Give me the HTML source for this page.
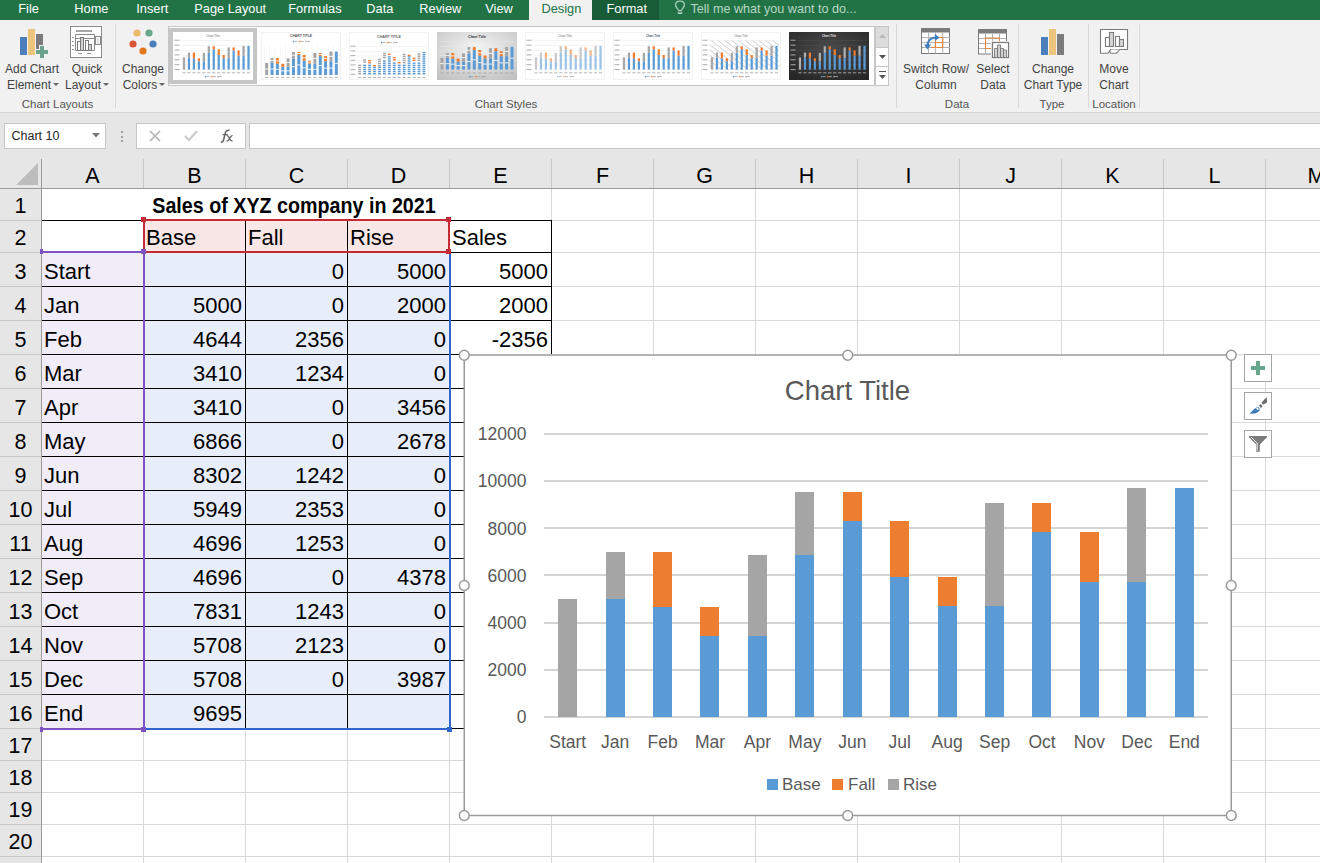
<!DOCTYPE html>
<html><head><meta charset="utf-8"><title>Excel</title><style>
*{margin:0;padding:0;box-sizing:border-box}
html,body{width:1320px;height:863px;overflow:hidden;background:#fff;font-family:"Liberation Sans", sans-serif}
.a{position:absolute}
.t{position:absolute;line-height:1;white-space:nowrap}
svg{position:absolute;overflow:visible}
</style></head><body>

<div class="a" style="left:0px;top:0px;width:1320px;height:20px;background:#217346"></div>
<div class="a" style="left:529px;top:0px;width:63px;height:20px;background:#f1f1f1"></div>
<div class="a" style="left:592px;top:0px;width:67px;height:20px;background:#185c37"></div>
<div class="t" style="left:18.30px;top:3.46px;font-size:12.8px;color:#fff;font-weight:normal;">File</div>
<div class="t" style="left:74.30px;top:3.46px;font-size:12.8px;color:#fff;font-weight:normal;">Home</div>
<div class="t" style="left:136.30px;top:3.46px;font-size:12.8px;color:#fff;font-weight:normal;">Insert</div>
<div class="t" style="left:194.30px;top:3.46px;font-size:12.8px;color:#fff;font-weight:normal;">Page Layout</div>
<div class="t" style="left:288.30px;top:3.46px;font-size:12.8px;color:#fff;font-weight:normal;">Formulas</div>
<div class="t" style="left:366.30px;top:3.46px;font-size:12.8px;color:#fff;font-weight:normal;">Data</div>
<div class="t" style="left:419.30px;top:3.46px;font-size:12.8px;color:#fff;font-weight:normal;">Review</div>
<div class="t" style="left:485.30px;top:3.46px;font-size:12.8px;color:#fff;font-weight:normal;">View</div>
<div class="t" style="left:541.50px;top:3.46px;font-size:12.8px;color:#217346;font-weight:normal;">Design</div>
<div class="t" style="left:606.50px;top:3.46px;font-size:12.8px;color:#fff;font-weight:normal;">Format</div>
<svg style="left:668px;top:0px" width="24" height="20" viewBox="668 0 24 20"><path d="M680 1.2C677.3 1.2 675.6 3 675.6 5C675.6 7.2 677.8 8.4 678.6 10.6H681.4C682.2 8.4 684.4 7.2 684.4 5C684.4 3 682.7 1.2 680 1.2Z" fill="none" stroke="#a9cdb6" stroke-width="1.3"/><path d="M677.3 12.2h5.4l-.6 1.8h-4.2z" fill="#a9cdb6"/></svg>
<div class="t" style="left:690.50px;top:2.63px;font-size:12.6px;color:#b9d6c3;font-weight:normal;">Tell me what you want to do...</div>
<div class="a" style="left:0px;top:20px;width:1320px;height:92px;background:#f1f1f1"></div>
<div class="a" style="left:0px;top:112px;width:1320px;height:1px;background:#d5d5d5"></div>
<div class="a" style="left:115px;top:24px;width:1px;height:84px;background:#d9d9d9"></div>
<div class="a" style="left:896px;top:24px;width:1px;height:84px;background:#d9d9d9"></div>
<div class="a" style="left:1018px;top:24px;width:1px;height:84px;background:#d9d9d9"></div>
<div class="a" style="left:1088px;top:24px;width:1px;height:84px;background:#d9d9d9"></div>
<div class="a" style="left:1139px;top:24px;width:1px;height:84px;background:#d9d9d9"></div>
<svg style="left:0px;top:0px" width="60" height="60" viewBox="0 0 60 60"><rect x="20" y="37" width="7" height="18" fill="#4a7fbb"/><rect x="28" y="29" width="7" height="26" fill="#ecc47c"/><rect x="36" y="34" width="7" height="15" fill="#7b7b7b"/><path d="M39 45h6v4h4v6h-4v4h-6v-4h-4v-6h4z" fill="#f1f1f1"/><path d="M40 46h4v4h4v4h-4v4h-4v-4h-4v-4h4z" fill="#6aa28e"/></svg>
<div class="t" style="left:-28.00px;width:120px;text-align:center;top:63.34px;font-size:12px;color:#444;font-weight:normal;">Add Chart</div>
<div class="t" style="left:-31.00px;width:120px;text-align:center;top:79.34px;font-size:12px;color:#444;font-weight:normal;">Element</div>
<svg style="left:53px;top:83px" width="6" height="4"><path d="M0 0h6L3 3z" fill="#666"/></svg>
<svg style="left:70px;top:26px" width="33" height="33" viewBox="0 0 33 33"><rect x="0.5" y="0.5" width="31" height="31" fill="#fff" stroke="#8c8c8c"/><rect x="6" y="4" width="16" height="2" fill="#a6a6a6"/><path d="M5.5 24.5v-16h19v16zM5.5 12.5h19" fill="none" stroke="#8c8c8c"/><rect x="7.5" y="15.5" width="3" height="9" fill="#fff" stroke="#7a7a7a"/><rect x="10.5" y="11.5" width="3" height="13" fill="#d0d0d0" stroke="#7a7a7a"/><rect x="15.5" y="14.5" width="3" height="10" fill="#fff" stroke="#7a7a7a"/><rect x="18.5" y="18.5" width="3" height="6" fill="#d0d0d0" stroke="#7a7a7a"/><rect x="25.5" y="10.5" width="5" height="8" fill="#fff" stroke="#8c8c8c"/><path d="M28 12.5v1M28 14.5v1M28 16.5v1" stroke="#8c8c8c"/><path d="M2 11.5h2M2 15.5h2M2 19.5h2M2 23.5h2M8 27.5h4M17 27.5h4" stroke="#9a9a9a"/></svg>
<div class="t" style="left:27.00px;width:120px;text-align:center;top:63.34px;font-size:12px;color:#444;font-weight:normal;">Quick</div>
<div class="t" style="left:23.00px;width:120px;text-align:center;top:79.34px;font-size:12px;color:#444;font-weight:normal;">Layout</div>
<svg style="left:103px;top:83px" width="6" height="4"><path d="M0 0h6L3 3z" fill="#666"/></svg>
<svg style="left:126px;top:26px" width="34" height="34" viewBox="0 0 34 34"><circle cx="11" cy="7" r="3.6" fill="#ecb86a"/><circle cx="23" cy="7" r="3.6" fill="#68a88a"/><circle cx="7" cy="18" r="3.6" fill="#d9553a"/><circle cx="27" cy="18" r="3.6" fill="#4a7fbb"/><circle cx="17" cy="25" r="3.6" fill="#e4761e"/></svg>
<div class="t" style="left:83.00px;width:120px;text-align:center;top:63.34px;font-size:12px;color:#444;font-weight:normal;">Change</div>
<div class="t" style="left:80.00px;width:120px;text-align:center;top:79.34px;font-size:12px;color:#444;font-weight:normal;">Colors</div>
<svg style="left:159px;top:83px" width="6" height="4"><path d="M0 0h6L3 3z" fill="#666"/></svg>
<div class="t" style="left:-2.50px;width:120px;text-align:center;top:98.77px;font-size:11.5px;color:#555;font-weight:normal;">Chart Layouts</div>
<div class="a" style="left:168px;top:26px;width:707px;height:60px;background:#fff;border:1px solid #c6c6c6"></div>
<div class="a" style="left:169px;top:28px;width:88px;height:56px;background:#c6c6c6"></div>
<div class="a" style="left:875px;top:26px;width:14px;height:60px;background:#fff;border:1px solid #c6c6c6"></div>
<div class="a" style="left:876px;top:27px;width:12px;height:20px;background:#dcdcdc"></div>
<div class="a" style="left:875px;top:47px;width:14px;height:1px;background:#c6c6c6"></div>
<div class="a" style="left:875px;top:66px;width:14px;height:1px;background:#c6c6c6"></div>
<svg style="left:879px;top:34px" width="7" height="4"><path d="M0 4h7L3.5 0z" fill="#b8b8b8"/></svg>
<svg style="left:879px;top:55px" width="7" height="4"><path d="M0 0h7L3.5 4z" fill="#555"/></svg>
<svg style="left:879px;top:71px" width="7" height="9"><path d="M0 0h7v1H0z" fill="#555"/><path d="M0 4h7L3.5 8z" fill="#555"/></svg>
<div class="t" style="left:446.00px;width:120px;text-align:center;top:98.77px;font-size:11.5px;color:#555;font-weight:normal;">Chart Styles</div>
<svg style="left:173px;top:32px" width="80" height="48" viewBox="0 0 80 48"><defs><radialGradient id="rg0" cx="50%" cy="35%" r="75%"><stop offset="0" stop-color="#4a4a4a"/><stop offset="1" stop-color="#262626"/></radialGradient><pattern id="hp0" width="4.2" height="4.2" patternUnits="userSpaceOnUse" patternTransform="rotate(38)"><rect width="4.2" height="0.7" fill="#c4c4c4"/></pattern></defs><rect width="80" height="48" fill="#fff"/><text x="40" y="5.1" text-anchor="middle" font-family="Liberation Sans" font-size="3.6" font-weight="normal" fill="#707070" textLength="14" lengthAdjust="spacingAndGlyphs">Chart Title</text><rect x="8.5" y="37.60" width="69.5" height="0.5" fill="#e8e8e8"/><rect x="1.5" y="37.00" width="5" height="1.1" fill="#a0a0a0" opacity="0.8"/><rect x="8.5" y="32.72" width="69.5" height="0.5" fill="#e8e8e8"/><rect x="1.5" y="32.12" width="5" height="1.1" fill="#a0a0a0" opacity="0.8"/><rect x="8.5" y="27.83" width="69.5" height="0.5" fill="#e8e8e8"/><rect x="1.5" y="27.23" width="5" height="1.1" fill="#a0a0a0" opacity="0.8"/><rect x="8.5" y="22.95" width="69.5" height="0.5" fill="#e8e8e8"/><rect x="1.5" y="22.35" width="5" height="1.1" fill="#a0a0a0" opacity="0.8"/><rect x="8.5" y="18.07" width="69.5" height="0.5" fill="#e8e8e8"/><rect x="1.5" y="17.47" width="5" height="1.1" fill="#a0a0a0" opacity="0.8"/><rect x="8.5" y="13.18" width="69.5" height="0.5" fill="#e8e8e8"/><rect x="1.5" y="12.58" width="5" height="1.1" fill="#a0a0a0" opacity="0.8"/><rect x="8.5" y="8.30" width="69.5" height="0.5" fill="#e8e8e8"/><rect x="1.5" y="7.70" width="5" height="1.1" fill="#a0a0a0" opacity="0.8"/><rect x="9.87" y="25.39" width="2.23" height="12.21" fill="#a5a5a5"/><rect x="9.38" y="40.3" width="3.2" height="1" fill="#a0a0a0" opacity="0.8"/><rect x="14.83" y="25.39" width="2.23" height="12.21" fill="#5b9bd5"/><rect x="14.83" y="20.51" width="2.23" height="4.88" fill="#a5a5a5"/><rect x="14.35" y="40.3" width="3.2" height="1" fill="#a0a0a0" opacity="0.8"/><rect x="19.79" y="26.26" width="2.23" height="11.34" fill="#5b9bd5"/><rect x="19.79" y="20.51" width="2.23" height="5.75" fill="#ed7d31"/><rect x="19.31" y="40.3" width="3.2" height="1" fill="#a0a0a0" opacity="0.8"/><rect x="24.76" y="29.27" width="2.23" height="8.33" fill="#5b9bd5"/><rect x="24.76" y="26.26" width="2.23" height="3.01" fill="#ed7d31"/><rect x="24.27" y="40.3" width="3.2" height="1" fill="#a0a0a0" opacity="0.8"/><rect x="29.72" y="29.27" width="2.23" height="8.33" fill="#5b9bd5"/><rect x="29.72" y="20.84" width="2.23" height="8.44" fill="#a5a5a5"/><rect x="29.24" y="40.3" width="3.2" height="1" fill="#a0a0a0" opacity="0.8"/><rect x="34.69" y="20.84" width="2.23" height="16.76" fill="#5b9bd5"/><rect x="34.69" y="14.30" width="2.23" height="6.54" fill="#a5a5a5"/><rect x="34.20" y="40.3" width="3.2" height="1" fill="#a0a0a0" opacity="0.8"/><rect x="39.65" y="17.33" width="2.23" height="20.27" fill="#5b9bd5"/><rect x="39.65" y="14.30" width="2.23" height="3.03" fill="#ed7d31"/><rect x="39.17" y="40.3" width="3.2" height="1" fill="#a0a0a0" opacity="0.8"/><rect x="44.62" y="23.07" width="2.23" height="14.53" fill="#5b9bd5"/><rect x="44.62" y="17.33" width="2.23" height="5.75" fill="#ed7d31"/><rect x="44.13" y="40.3" width="3.2" height="1" fill="#a0a0a0" opacity="0.8"/><rect x="49.58" y="26.13" width="2.23" height="11.47" fill="#5b9bd5"/><rect x="49.58" y="23.07" width="2.23" height="3.06" fill="#ed7d31"/><rect x="49.10" y="40.3" width="3.2" height="1" fill="#a0a0a0" opacity="0.8"/><rect x="54.54" y="26.13" width="2.23" height="11.47" fill="#5b9bd5"/><rect x="54.54" y="15.44" width="2.23" height="10.69" fill="#a5a5a5"/><rect x="54.06" y="40.3" width="3.2" height="1" fill="#a0a0a0" opacity="0.8"/><rect x="59.51" y="18.48" width="2.23" height="19.12" fill="#5b9bd5"/><rect x="59.51" y="15.44" width="2.23" height="3.03" fill="#ed7d31"/><rect x="59.02" y="40.3" width="3.2" height="1" fill="#a0a0a0" opacity="0.8"/><rect x="64.47" y="23.66" width="2.23" height="13.94" fill="#5b9bd5"/><rect x="64.47" y="18.48" width="2.23" height="5.18" fill="#ed7d31"/><rect x="63.99" y="40.3" width="3.2" height="1" fill="#a0a0a0" opacity="0.8"/><rect x="69.44" y="23.66" width="2.23" height="13.94" fill="#5b9bd5"/><rect x="69.44" y="13.93" width="2.23" height="9.73" fill="#a5a5a5"/><rect x="68.95" y="40.3" width="3.2" height="1" fill="#a0a0a0" opacity="0.8"/><rect x="74.40" y="13.93" width="2.23" height="23.67" fill="#5b9bd5"/><rect x="73.92" y="40.3" width="3.2" height="1" fill="#a0a0a0" opacity="0.8"/><rect x="32.0" y="43.9" width="1.3" height="1.5" fill="#5b9bd5"/><rect x="33.6" y="44.0" width="3" height="1.1" fill="#a0a0a0" opacity="0.7"/><rect x="38.2" y="43.9" width="1.3" height="1.5" fill="#ed7d31"/><rect x="39.8" y="44.0" width="3" height="1.1" fill="#a0a0a0" opacity="0.7"/><rect x="44.4" y="43.9" width="1.3" height="1.5" fill="#a5a5a5"/><rect x="46.0" y="44.0" width="3" height="1.1" fill="#a0a0a0" opacity="0.7"/></svg>
<svg style="left:261px;top:32px" width="80" height="48" viewBox="0 0 80 48"><defs><radialGradient id="rg1" cx="50%" cy="35%" r="75%"><stop offset="0" stop-color="#4a4a4a"/><stop offset="1" stop-color="#262626"/></radialGradient><pattern id="hp1" width="4.2" height="4.2" patternUnits="userSpaceOnUse" patternTransform="rotate(38)"><rect width="4.2" height="0.7" fill="#c4c4c4"/></pattern></defs><rect width="80" height="48" fill="#fff"/><rect x="0.5" y="0.5" width="79" height="47" fill="none" stroke="#f2f2f2"/><text x="40" y="4.9" text-anchor="middle" font-family="Liberation Sans" font-size="4.2" font-weight="bold" fill="#555" textLength="22" lengthAdjust="spacingAndGlyphs">CHART TITLE</text><rect x="3.00" y="14" width="0.4" height="29" fill="#ececec"/><rect x="8.36" y="14" width="0.4" height="29" fill="#ececec"/><rect x="13.71" y="14" width="0.4" height="29" fill="#ececec"/><rect x="19.07" y="14" width="0.4" height="29" fill="#ececec"/><rect x="24.43" y="14" width="0.4" height="29" fill="#ececec"/><rect x="29.79" y="14" width="0.4" height="29" fill="#ececec"/><rect x="35.14" y="14" width="0.4" height="29" fill="#ececec"/><rect x="40.50" y="14" width="0.4" height="29" fill="#ececec"/><rect x="45.86" y="14" width="0.4" height="29" fill="#ececec"/><rect x="51.21" y="14" width="0.4" height="29" fill="#ececec"/><rect x="56.57" y="14" width="0.4" height="29" fill="#ececec"/><rect x="61.93" y="14" width="0.4" height="29" fill="#ececec"/><rect x="67.29" y="14" width="0.4" height="29" fill="#ececec"/><rect x="72.64" y="14" width="0.4" height="29" fill="#ececec"/><rect x="78.00" y="14" width="0.4" height="29" fill="#ececec"/><rect x="4.18" y="30.92" width="3.00" height="12.08" fill="#a5a5a5"/><rect x="3.68" y="36.46" width="4.00" height="1" fill="#fff" opacity="0.85"/><rect x="4.08" y="45" width="3.2" height="1" fill="#a0a0a0" opacity="0.8"/><rect x="9.54" y="30.92" width="3.00" height="12.08" fill="#5b9bd5"/><rect x="9.04" y="36.46" width="4.00" height="1" fill="#fff" opacity="0.85"/><rect x="9.54" y="26.08" width="3.00" height="4.83" fill="#a5a5a5"/><rect x="9.04" y="28.00" width="4.00" height="1" fill="#fff" opacity="0.85"/><rect x="9.44" y="45" width="3.2" height="1" fill="#a0a0a0" opacity="0.8"/><rect x="14.89" y="31.78" width="3.00" height="11.22" fill="#5b9bd5"/><rect x="14.39" y="36.89" width="4.00" height="1" fill="#fff" opacity="0.85"/><rect x="14.89" y="26.08" width="3.00" height="5.69" fill="#ed7d31"/><rect x="14.39" y="28.43" width="4.00" height="1" fill="#fff" opacity="0.85"/><rect x="14.79" y="45" width="3.2" height="1" fill="#a0a0a0" opacity="0.8"/><rect x="20.25" y="34.76" width="3.00" height="8.24" fill="#5b9bd5"/><rect x="19.75" y="38.38" width="4.00" height="1" fill="#fff" opacity="0.85"/><rect x="20.25" y="31.78" width="3.00" height="2.98" fill="#ed7d31"/><rect x="20.15" y="45" width="3.2" height="1" fill="#a0a0a0" opacity="0.8"/><rect x="25.61" y="34.76" width="3.00" height="8.24" fill="#5b9bd5"/><rect x="25.11" y="38.38" width="4.00" height="1" fill="#fff" opacity="0.85"/><rect x="25.61" y="26.41" width="3.00" height="8.35" fill="#a5a5a5"/><rect x="25.11" y="30.08" width="4.00" height="1" fill="#fff" opacity="0.85"/><rect x="25.51" y="45" width="3.2" height="1" fill="#a0a0a0" opacity="0.8"/><rect x="30.96" y="26.41" width="3.00" height="16.59" fill="#5b9bd5"/><rect x="30.46" y="34.20" width="4.00" height="1" fill="#fff" opacity="0.85"/><rect x="30.96" y="19.94" width="3.00" height="6.47" fill="#a5a5a5"/><rect x="30.46" y="22.67" width="4.00" height="1" fill="#fff" opacity="0.85"/><rect x="30.86" y="45" width="3.2" height="1" fill="#a0a0a0" opacity="0.8"/><rect x="36.32" y="22.94" width="3.00" height="20.06" fill="#5b9bd5"/><rect x="35.82" y="32.47" width="4.00" height="1" fill="#fff" opacity="0.85"/><rect x="36.32" y="19.94" width="3.00" height="3.00" fill="#ed7d31"/><rect x="35.82" y="20.94" width="4.00" height="1" fill="#fff" opacity="0.85"/><rect x="36.22" y="45" width="3.2" height="1" fill="#a0a0a0" opacity="0.8"/><rect x="41.68" y="28.62" width="3.00" height="14.38" fill="#5b9bd5"/><rect x="41.18" y="35.31" width="4.00" height="1" fill="#fff" opacity="0.85"/><rect x="41.68" y="22.94" width="3.00" height="5.69" fill="#ed7d31"/><rect x="41.18" y="25.28" width="4.00" height="1" fill="#fff" opacity="0.85"/><rect x="41.58" y="45" width="3.2" height="1" fill="#a0a0a0" opacity="0.8"/><rect x="47.04" y="31.65" width="3.00" height="11.35" fill="#5b9bd5"/><rect x="46.54" y="36.83" width="4.00" height="1" fill="#fff" opacity="0.85"/><rect x="47.04" y="28.62" width="3.00" height="3.03" fill="#ed7d31"/><rect x="46.54" y="29.64" width="4.00" height="1" fill="#fff" opacity="0.85"/><rect x="46.94" y="45" width="3.2" height="1" fill="#a0a0a0" opacity="0.8"/><rect x="52.39" y="31.65" width="3.00" height="11.35" fill="#5b9bd5"/><rect x="51.89" y="36.83" width="4.00" height="1" fill="#fff" opacity="0.85"/><rect x="52.39" y="21.07" width="3.00" height="10.58" fill="#a5a5a5"/><rect x="51.89" y="25.86" width="4.00" height="1" fill="#fff" opacity="0.85"/><rect x="52.29" y="45" width="3.2" height="1" fill="#a0a0a0" opacity="0.8"/><rect x="57.75" y="24.08" width="3.00" height="18.92" fill="#5b9bd5"/><rect x="57.25" y="33.04" width="4.00" height="1" fill="#fff" opacity="0.85"/><rect x="57.75" y="21.07" width="3.00" height="3.00" fill="#ed7d31"/><rect x="57.25" y="22.07" width="4.00" height="1" fill="#fff" opacity="0.85"/><rect x="57.65" y="45" width="3.2" height="1" fill="#a0a0a0" opacity="0.8"/><rect x="63.11" y="29.21" width="3.00" height="13.79" fill="#5b9bd5"/><rect x="62.61" y="35.60" width="4.00" height="1" fill="#fff" opacity="0.85"/><rect x="63.11" y="24.08" width="3.00" height="5.13" fill="#ed7d31"/><rect x="62.61" y="26.14" width="4.00" height="1" fill="#fff" opacity="0.85"/><rect x="63.01" y="45" width="3.2" height="1" fill="#a0a0a0" opacity="0.8"/><rect x="68.46" y="29.21" width="3.00" height="13.79" fill="#5b9bd5"/><rect x="67.96" y="35.60" width="4.00" height="1" fill="#fff" opacity="0.85"/><rect x="68.46" y="19.57" width="3.00" height="9.64" fill="#a5a5a5"/><rect x="67.96" y="23.89" width="4.00" height="1" fill="#fff" opacity="0.85"/><rect x="68.36" y="45" width="3.2" height="1" fill="#a0a0a0" opacity="0.8"/><rect x="73.82" y="19.57" width="3.00" height="23.43" fill="#5b9bd5"/><rect x="73.32" y="30.79" width="4.00" height="1" fill="#fff" opacity="0.85"/><rect x="73.72" y="45" width="3.2" height="1" fill="#a0a0a0" opacity="0.8"/><rect x="32.0" y="8.8" width="1.3" height="1.5" fill="#5b9bd5"/><rect x="33.6" y="8.9" width="3" height="1.1" fill="#a0a0a0" opacity="0.7"/><rect x="38.2" y="8.8" width="1.3" height="1.5" fill="#ed7d31"/><rect x="39.8" y="8.9" width="3" height="1.1" fill="#a0a0a0" opacity="0.7"/><rect x="44.4" y="8.8" width="1.3" height="1.5" fill="#a5a5a5"/><rect x="46.0" y="8.9" width="3" height="1.1" fill="#a0a0a0" opacity="0.7"/></svg>
<svg style="left:349px;top:32px" width="80" height="48" viewBox="0 0 80 48"><defs><radialGradient id="rg2" cx="50%" cy="35%" r="75%"><stop offset="0" stop-color="#4a4a4a"/><stop offset="1" stop-color="#262626"/></radialGradient><pattern id="hp2" width="4.2" height="4.2" patternUnits="userSpaceOnUse" patternTransform="rotate(38)"><rect width="4.2" height="0.7" fill="#c4c4c4"/></pattern></defs><rect width="80" height="48" fill="#fff"/><rect x="0.5" y="0.5" width="79" height="47" fill="none" stroke="#f2f2f2"/><text x="40" y="5.9" text-anchor="middle" font-family="Liberation Sans" font-size="4.2" font-weight="bold" fill="#666" textLength="24" lengthAdjust="spacingAndGlyphs">CHART TITLE</text><rect x="8.2" y="42.40" width="69.2" height="0.5" fill="#e8e8e8"/><rect x="1.5" y="41.80" width="5" height="1.1" fill="#a0a0a0" opacity="0.8"/><rect x="8.2" y="37.72" width="69.2" height="0.5" fill="#e8e8e8"/><rect x="1.5" y="37.12" width="5" height="1.1" fill="#a0a0a0" opacity="0.8"/><rect x="8.2" y="33.03" width="69.2" height="0.5" fill="#e8e8e8"/><rect x="1.5" y="32.43" width="5" height="1.1" fill="#a0a0a0" opacity="0.8"/><rect x="8.2" y="28.35" width="69.2" height="0.5" fill="#e8e8e8"/><rect x="1.5" y="27.75" width="5" height="1.1" fill="#a0a0a0" opacity="0.8"/><rect x="8.2" y="23.67" width="69.2" height="0.5" fill="#e8e8e8"/><rect x="1.5" y="23.07" width="5" height="1.1" fill="#a0a0a0" opacity="0.8"/><rect x="8.2" y="18.98" width="69.2" height="0.5" fill="#e8e8e8"/><rect x="1.5" y="18.38" width="5" height="1.1" fill="#a0a0a0" opacity="0.8"/><rect x="8.2" y="14.30" width="69.2" height="0.5" fill="#e8e8e8"/><rect x="1.5" y="13.70" width="5" height="1.1" fill="#a0a0a0" opacity="0.8"/><rect x="9.29" y="41.00" width="2.77" height="1.4" fill="#a5a5a5"/><rect x="9.29" y="38.90" width="2.77" height="1.4" fill="#a5a5a5"/><rect x="9.29" y="36.80" width="2.77" height="1.4" fill="#a5a5a5"/><rect x="9.29" y="34.70" width="2.77" height="1.4" fill="#a5a5a5"/><rect x="9.29" y="32.60" width="2.77" height="1.4" fill="#a5a5a5"/><rect x="9.07" y="45" width="3.2" height="1" fill="#a0a0a0" opacity="0.8"/><rect x="14.23" y="41.00" width="2.77" height="1.4" fill="#5b9bd5"/><rect x="14.23" y="38.90" width="2.77" height="1.4" fill="#5b9bd5"/><rect x="14.23" y="36.80" width="2.77" height="1.4" fill="#5b9bd5"/><rect x="14.23" y="34.70" width="2.77" height="1.4" fill="#5b9bd5"/><rect x="14.23" y="32.60" width="2.77" height="1.4" fill="#5b9bd5"/><rect x="14.23" y="29.29" width="2.77" height="1.4" fill="#a5a5a5"/><rect x="14.23" y="27.19" width="2.77" height="1.4" fill="#a5a5a5"/><rect x="14.01" y="45" width="3.2" height="1" fill="#a0a0a0" opacity="0.8"/><rect x="19.17" y="41.00" width="2.77" height="1.4" fill="#5b9bd5"/><rect x="19.17" y="38.90" width="2.77" height="1.4" fill="#5b9bd5"/><rect x="19.17" y="36.80" width="2.77" height="1.4" fill="#5b9bd5"/><rect x="19.17" y="34.70" width="2.77" height="1.4" fill="#5b9bd5"/><rect x="19.17" y="32.60" width="2.77" height="1.4" fill="#5b9bd5"/><rect x="19.17" y="30.13" width="2.77" height="1.4" fill="#ed7d31"/><rect x="19.17" y="28.03" width="2.77" height="1.4" fill="#ed7d31"/><rect x="18.96" y="45" width="3.2" height="1" fill="#a0a0a0" opacity="0.8"/><rect x="24.12" y="41.00" width="2.77" height="1.4" fill="#5b9bd5"/><rect x="24.12" y="38.90" width="2.77" height="1.4" fill="#5b9bd5"/><rect x="24.12" y="36.80" width="2.77" height="1.4" fill="#5b9bd5"/><rect x="24.12" y="34.70" width="2.77" height="1.4" fill="#5b9bd5"/><rect x="24.12" y="33.01" width="2.77" height="1.4" fill="#ed7d31"/><rect x="23.90" y="45" width="3.2" height="1" fill="#a0a0a0" opacity="0.8"/><rect x="29.06" y="41.00" width="2.77" height="1.4" fill="#5b9bd5"/><rect x="29.06" y="38.90" width="2.77" height="1.4" fill="#5b9bd5"/><rect x="29.06" y="36.80" width="2.77" height="1.4" fill="#5b9bd5"/><rect x="29.06" y="34.70" width="2.77" height="1.4" fill="#5b9bd5"/><rect x="29.06" y="33.01" width="2.77" height="1.4" fill="#a5a5a5"/><rect x="29.06" y="30.91" width="2.77" height="1.4" fill="#a5a5a5"/><rect x="29.06" y="28.81" width="2.77" height="1.4" fill="#a5a5a5"/><rect x="29.06" y="26.71" width="2.77" height="1.4" fill="#a5a5a5"/><rect x="28.84" y="45" width="3.2" height="1" fill="#a0a0a0" opacity="0.8"/><rect x="34.00" y="41.00" width="2.77" height="1.4" fill="#5b9bd5"/><rect x="34.00" y="38.90" width="2.77" height="1.4" fill="#5b9bd5"/><rect x="34.00" y="36.80" width="2.77" height="1.4" fill="#5b9bd5"/><rect x="34.00" y="34.70" width="2.77" height="1.4" fill="#5b9bd5"/><rect x="34.00" y="32.60" width="2.77" height="1.4" fill="#5b9bd5"/><rect x="34.00" y="30.50" width="2.77" height="1.4" fill="#5b9bd5"/><rect x="34.00" y="28.40" width="2.77" height="1.4" fill="#5b9bd5"/><rect x="34.00" y="24.92" width="2.77" height="1.4" fill="#a5a5a5"/><rect x="34.00" y="22.82" width="2.77" height="1.4" fill="#a5a5a5"/><rect x="34.00" y="20.72" width="2.77" height="1.4" fill="#a5a5a5"/><rect x="33.79" y="45" width="3.2" height="1" fill="#a0a0a0" opacity="0.8"/><rect x="38.94" y="41.00" width="2.77" height="1.4" fill="#5b9bd5"/><rect x="38.94" y="38.90" width="2.77" height="1.4" fill="#5b9bd5"/><rect x="38.94" y="36.80" width="2.77" height="1.4" fill="#5b9bd5"/><rect x="38.94" y="34.70" width="2.77" height="1.4" fill="#5b9bd5"/><rect x="38.94" y="32.60" width="2.77" height="1.4" fill="#5b9bd5"/><rect x="38.94" y="30.50" width="2.77" height="1.4" fill="#5b9bd5"/><rect x="38.94" y="28.40" width="2.77" height="1.4" fill="#5b9bd5"/><rect x="38.94" y="26.30" width="2.77" height="1.4" fill="#5b9bd5"/><rect x="38.94" y="24.20" width="2.77" height="1.4" fill="#5b9bd5"/><rect x="38.94" y="21.56" width="2.77" height="1.4" fill="#ed7d31"/><rect x="38.73" y="45" width="3.2" height="1" fill="#a0a0a0" opacity="0.8"/><rect x="43.89" y="41.00" width="2.77" height="1.4" fill="#5b9bd5"/><rect x="43.89" y="38.90" width="2.77" height="1.4" fill="#5b9bd5"/><rect x="43.89" y="36.80" width="2.77" height="1.4" fill="#5b9bd5"/><rect x="43.89" y="34.70" width="2.77" height="1.4" fill="#5b9bd5"/><rect x="43.89" y="32.60" width="2.77" height="1.4" fill="#5b9bd5"/><rect x="43.89" y="30.50" width="2.77" height="1.4" fill="#5b9bd5"/><rect x="43.89" y="27.07" width="2.77" height="1.4" fill="#ed7d31"/><rect x="43.89" y="24.97" width="2.77" height="1.4" fill="#ed7d31"/><rect x="43.67" y="45" width="3.2" height="1" fill="#a0a0a0" opacity="0.8"/><rect x="48.83" y="41.00" width="2.77" height="1.4" fill="#5b9bd5"/><rect x="48.83" y="38.90" width="2.77" height="1.4" fill="#5b9bd5"/><rect x="48.83" y="36.80" width="2.77" height="1.4" fill="#5b9bd5"/><rect x="48.83" y="34.70" width="2.77" height="1.4" fill="#5b9bd5"/><rect x="48.83" y="32.60" width="2.77" height="1.4" fill="#5b9bd5"/><rect x="48.83" y="30.00" width="2.77" height="1.4" fill="#ed7d31"/><rect x="48.61" y="45" width="3.2" height="1" fill="#a0a0a0" opacity="0.8"/><rect x="53.77" y="41.00" width="2.77" height="1.4" fill="#5b9bd5"/><rect x="53.77" y="38.90" width="2.77" height="1.4" fill="#5b9bd5"/><rect x="53.77" y="36.80" width="2.77" height="1.4" fill="#5b9bd5"/><rect x="53.77" y="34.70" width="2.77" height="1.4" fill="#5b9bd5"/><rect x="53.77" y="32.60" width="2.77" height="1.4" fill="#5b9bd5"/><rect x="53.77" y="30.00" width="2.77" height="1.4" fill="#a5a5a5"/><rect x="53.77" y="27.90" width="2.77" height="1.4" fill="#a5a5a5"/><rect x="53.77" y="25.80" width="2.77" height="1.4" fill="#a5a5a5"/><rect x="53.77" y="23.70" width="2.77" height="1.4" fill="#a5a5a5"/><rect x="53.77" y="21.60" width="2.77" height="1.4" fill="#a5a5a5"/><rect x="53.56" y="45" width="3.2" height="1" fill="#a0a0a0" opacity="0.8"/><rect x="58.72" y="41.00" width="2.77" height="1.4" fill="#5b9bd5"/><rect x="58.72" y="38.90" width="2.77" height="1.4" fill="#5b9bd5"/><rect x="58.72" y="36.80" width="2.77" height="1.4" fill="#5b9bd5"/><rect x="58.72" y="34.70" width="2.77" height="1.4" fill="#5b9bd5"/><rect x="58.72" y="32.60" width="2.77" height="1.4" fill="#5b9bd5"/><rect x="58.72" y="30.50" width="2.77" height="1.4" fill="#5b9bd5"/><rect x="58.72" y="28.40" width="2.77" height="1.4" fill="#5b9bd5"/><rect x="58.72" y="26.30" width="2.77" height="1.4" fill="#5b9bd5"/><rect x="58.72" y="24.20" width="2.77" height="1.4" fill="#5b9bd5"/><rect x="58.72" y="22.66" width="2.77" height="1.4" fill="#ed7d31"/><rect x="58.50" y="45" width="3.2" height="1" fill="#a0a0a0" opacity="0.8"/><rect x="63.66" y="41.00" width="2.77" height="1.4" fill="#5b9bd5"/><rect x="63.66" y="38.90" width="2.77" height="1.4" fill="#5b9bd5"/><rect x="63.66" y="36.80" width="2.77" height="1.4" fill="#5b9bd5"/><rect x="63.66" y="34.70" width="2.77" height="1.4" fill="#5b9bd5"/><rect x="63.66" y="32.60" width="2.77" height="1.4" fill="#5b9bd5"/><rect x="63.66" y="30.50" width="2.77" height="1.4" fill="#5b9bd5"/><rect x="63.66" y="27.63" width="2.77" height="1.4" fill="#ed7d31"/><rect x="63.66" y="25.53" width="2.77" height="1.4" fill="#ed7d31"/><rect x="63.44" y="45" width="3.2" height="1" fill="#a0a0a0" opacity="0.8"/><rect x="68.60" y="41.00" width="2.77" height="1.4" fill="#5b9bd5"/><rect x="68.60" y="38.90" width="2.77" height="1.4" fill="#5b9bd5"/><rect x="68.60" y="36.80" width="2.77" height="1.4" fill="#5b9bd5"/><rect x="68.60" y="34.70" width="2.77" height="1.4" fill="#5b9bd5"/><rect x="68.60" y="32.60" width="2.77" height="1.4" fill="#5b9bd5"/><rect x="68.60" y="30.50" width="2.77" height="1.4" fill="#5b9bd5"/><rect x="68.60" y="27.63" width="2.77" height="1.4" fill="#a5a5a5"/><rect x="68.60" y="25.53" width="2.77" height="1.4" fill="#a5a5a5"/><rect x="68.60" y="23.43" width="2.77" height="1.4" fill="#a5a5a5"/><rect x="68.60" y="21.33" width="2.77" height="1.4" fill="#a5a5a5"/><rect x="68.39" y="45" width="3.2" height="1" fill="#a0a0a0" opacity="0.8"/><rect x="73.54" y="41.00" width="2.77" height="1.4" fill="#5b9bd5"/><rect x="73.54" y="38.90" width="2.77" height="1.4" fill="#5b9bd5"/><rect x="73.54" y="36.80" width="2.77" height="1.4" fill="#5b9bd5"/><rect x="73.54" y="34.70" width="2.77" height="1.4" fill="#5b9bd5"/><rect x="73.54" y="32.60" width="2.77" height="1.4" fill="#5b9bd5"/><rect x="73.54" y="30.50" width="2.77" height="1.4" fill="#5b9bd5"/><rect x="73.54" y="28.40" width="2.77" height="1.4" fill="#5b9bd5"/><rect x="73.54" y="26.30" width="2.77" height="1.4" fill="#5b9bd5"/><rect x="73.54" y="24.20" width="2.77" height="1.4" fill="#5b9bd5"/><rect x="73.54" y="22.10" width="2.77" height="1.4" fill="#5b9bd5"/><rect x="73.54" y="20.00" width="2.77" height="1.4" fill="#5b9bd5"/><rect x="73.33" y="45" width="3.2" height="1" fill="#a0a0a0" opacity="0.8"/><rect x="32.0" y="9.8" width="1.3" height="1.5" fill="#5b9bd5"/><rect x="33.6" y="9.9" width="3" height="1.1" fill="#a0a0a0" opacity="0.7"/><rect x="38.2" y="9.8" width="1.3" height="1.5" fill="#ed7d31"/><rect x="39.8" y="9.9" width="3" height="1.1" fill="#a0a0a0" opacity="0.7"/><rect x="44.4" y="9.8" width="1.3" height="1.5" fill="#a5a5a5"/><rect x="46.0" y="9.9" width="3" height="1.1" fill="#a0a0a0" opacity="0.7"/></svg>
<svg style="left:437px;top:32px" width="80" height="48" viewBox="0 0 80 48"><defs><radialGradient id="rg3" cx="50%" cy="35%" r="75%"><stop offset="0" stop-color="#f6f6f6"/><stop offset="1" stop-color="#c2c2c2"/></radialGradient><pattern id="hp3" width="4.2" height="4.2" patternUnits="userSpaceOnUse" patternTransform="rotate(38)"><rect width="4.2" height="0.7" fill="#c4c4c4"/></pattern></defs><rect width="80" height="48" fill="url(#rg3)"/><text x="40" y="5.9" text-anchor="middle" font-family="Liberation Sans" font-size="4.4" font-weight="bold" fill="#333" textLength="18" lengthAdjust="spacingAndGlyphs">Chart Title</text><rect x="2.3" y="37.60" width="75.4" height="0.5" fill="#e8e8e8"/><rect x="2.3" y="32.88" width="75.4" height="0.5" fill="#e8e8e8"/><rect x="2.3" y="28.17" width="75.4" height="0.5" fill="#e8e8e8"/><rect x="2.3" y="23.45" width="75.4" height="0.5" fill="#e8e8e8"/><rect x="2.3" y="18.73" width="75.4" height="0.5" fill="#e8e8e8"/><rect x="2.3" y="14.02" width="75.4" height="0.5" fill="#e8e8e8"/><rect x="2.3" y="9.30" width="75.4" height="0.5" fill="#e8e8e8"/><rect x="3.48" y="25.81" width="3.02" height="11.79" fill="#a5a5a5"/><rect x="2.98" y="31.20" width="4.02" height="1" fill="#fff" opacity="0.85"/><rect x="3.39" y="40.5" width="3.2" height="1" fill="#a0a0a0" opacity="0.8"/><rect x="8.87" y="25.81" width="3.02" height="11.79" fill="#5b9bd5"/><rect x="8.37" y="31.20" width="4.02" height="1" fill="#fff" opacity="0.85"/><rect x="8.87" y="21.09" width="3.02" height="4.72" fill="#a5a5a5"/><rect x="8.37" y="22.95" width="4.02" height="1" fill="#fff" opacity="0.85"/><rect x="8.78" y="40.5" width="3.2" height="1" fill="#a0a0a0" opacity="0.8"/><rect x="14.26" y="26.65" width="3.02" height="10.95" fill="#5b9bd5"/><rect x="13.76" y="31.62" width="4.02" height="1" fill="#fff" opacity="0.85"/><rect x="14.26" y="21.09" width="3.02" height="5.56" fill="#ed7d31"/><rect x="13.76" y="23.37" width="4.02" height="1" fill="#fff" opacity="0.85"/><rect x="14.16" y="40.5" width="3.2" height="1" fill="#a0a0a0" opacity="0.8"/><rect x="19.64" y="29.56" width="3.02" height="8.04" fill="#5b9bd5"/><rect x="19.14" y="33.08" width="4.02" height="1" fill="#fff" opacity="0.85"/><rect x="19.64" y="26.65" width="3.02" height="2.91" fill="#ed7d31"/><rect x="19.55" y="40.5" width="3.2" height="1" fill="#a0a0a0" opacity="0.8"/><rect x="25.03" y="29.56" width="3.02" height="8.04" fill="#5b9bd5"/><rect x="24.53" y="33.08" width="4.02" height="1" fill="#fff" opacity="0.85"/><rect x="25.03" y="21.41" width="3.02" height="8.15" fill="#a5a5a5"/><rect x="24.53" y="24.98" width="4.02" height="1" fill="#fff" opacity="0.85"/><rect x="24.94" y="40.5" width="3.2" height="1" fill="#a0a0a0" opacity="0.8"/><rect x="30.41" y="21.41" width="3.02" height="16.19" fill="#5b9bd5"/><rect x="29.91" y="29.00" width="4.02" height="1" fill="#fff" opacity="0.85"/><rect x="30.41" y="15.09" width="3.02" height="6.32" fill="#a5a5a5"/><rect x="29.91" y="17.75" width="4.02" height="1" fill="#fff" opacity="0.85"/><rect x="30.32" y="40.5" width="3.2" height="1" fill="#a0a0a0" opacity="0.8"/><rect x="35.80" y="18.02" width="3.02" height="19.58" fill="#5b9bd5"/><rect x="35.30" y="27.31" width="4.02" height="1" fill="#fff" opacity="0.85"/><rect x="35.80" y="15.09" width="3.02" height="2.93" fill="#ed7d31"/><rect x="35.71" y="40.5" width="3.2" height="1" fill="#a0a0a0" opacity="0.8"/><rect x="41.18" y="23.57" width="3.02" height="14.03" fill="#5b9bd5"/><rect x="40.68" y="30.09" width="4.02" height="1" fill="#fff" opacity="0.85"/><rect x="41.18" y="18.02" width="3.02" height="5.55" fill="#ed7d31"/><rect x="40.68" y="20.30" width="4.02" height="1" fill="#fff" opacity="0.85"/><rect x="41.09" y="40.5" width="3.2" height="1" fill="#a0a0a0" opacity="0.8"/><rect x="46.57" y="26.53" width="3.02" height="11.07" fill="#5b9bd5"/><rect x="46.07" y="31.56" width="4.02" height="1" fill="#fff" opacity="0.85"/><rect x="46.57" y="23.57" width="3.02" height="2.95" fill="#ed7d31"/><rect x="46.48" y="40.5" width="3.2" height="1" fill="#a0a0a0" opacity="0.8"/><rect x="51.96" y="26.53" width="3.02" height="11.07" fill="#5b9bd5"/><rect x="51.46" y="31.56" width="4.02" height="1" fill="#fff" opacity="0.85"/><rect x="51.96" y="16.20" width="3.02" height="10.32" fill="#a5a5a5"/><rect x="51.46" y="20.86" width="4.02" height="1" fill="#fff" opacity="0.85"/><rect x="51.86" y="40.5" width="3.2" height="1" fill="#a0a0a0" opacity="0.8"/><rect x="57.34" y="19.13" width="3.02" height="18.47" fill="#5b9bd5"/><rect x="56.84" y="27.87" width="4.02" height="1" fill="#fff" opacity="0.85"/><rect x="57.34" y="16.20" width="3.02" height="2.93" fill="#ed7d31"/><rect x="57.25" y="40.5" width="3.2" height="1" fill="#a0a0a0" opacity="0.8"/><rect x="62.73" y="24.14" width="3.02" height="13.46" fill="#5b9bd5"/><rect x="62.23" y="30.37" width="4.02" height="1" fill="#fff" opacity="0.85"/><rect x="62.73" y="19.13" width="3.02" height="5.01" fill="#ed7d31"/><rect x="62.23" y="21.14" width="4.02" height="1" fill="#fff" opacity="0.85"/><rect x="62.64" y="40.5" width="3.2" height="1" fill="#a0a0a0" opacity="0.8"/><rect x="68.11" y="24.14" width="3.02" height="13.46" fill="#5b9bd5"/><rect x="67.61" y="30.37" width="4.02" height="1" fill="#fff" opacity="0.85"/><rect x="68.11" y="14.74" width="3.02" height="9.40" fill="#a5a5a5"/><rect x="67.61" y="18.94" width="4.02" height="1" fill="#fff" opacity="0.85"/><rect x="68.02" y="40.5" width="3.2" height="1" fill="#a0a0a0" opacity="0.8"/><rect x="73.50" y="14.74" width="3.02" height="22.86" fill="#5b9bd5"/><rect x="73.00" y="25.67" width="4.02" height="1" fill="#fff" opacity="0.85"/><rect x="73.41" y="40.5" width="3.2" height="1" fill="#a0a0a0" opacity="0.8"/><rect x="32.0" y="43.9" width="1.3" height="1.5" fill="#5b9bd5"/><rect x="33.6" y="44.0" width="3" height="1.1" fill="#a0a0a0" opacity="0.7"/><rect x="38.2" y="43.9" width="1.3" height="1.5" fill="#ed7d31"/><rect x="39.8" y="44.0" width="3" height="1.1" fill="#a0a0a0" opacity="0.7"/><rect x="44.4" y="43.9" width="1.3" height="1.5" fill="#a5a5a5"/><rect x="46.0" y="44.0" width="3" height="1.1" fill="#a0a0a0" opacity="0.7"/></svg>
<svg style="left:525px;top:32px" width="80" height="48" viewBox="0 0 80 48"><defs><radialGradient id="rg4" cx="50%" cy="35%" r="75%"><stop offset="0" stop-color="#4a4a4a"/><stop offset="1" stop-color="#262626"/></radialGradient><pattern id="hp4" width="4.2" height="4.2" patternUnits="userSpaceOnUse" patternTransform="rotate(38)"><rect width="4.2" height="0.7" fill="#c4c4c4"/></pattern></defs><rect width="80" height="48" fill="#fff"/><rect x="0.5" y="0.5" width="79" height="47" fill="none" stroke="#f2f2f2"/><text x="40" y="5.1" text-anchor="middle" font-family="Liberation Sans" font-size="3.6" font-weight="normal" fill="#707070" textLength="14" lengthAdjust="spacingAndGlyphs">Chart Title</text><rect x="8.5" y="37.60" width="69.5" height="0.5" fill="#e8e8e8"/><rect x="1.5" y="37.00" width="5" height="1.1" fill="#a0a0a0" opacity="0.8"/><rect x="8.5" y="32.72" width="69.5" height="0.5" fill="#e8e8e8"/><rect x="1.5" y="32.12" width="5" height="1.1" fill="#a0a0a0" opacity="0.8"/><rect x="8.5" y="27.83" width="69.5" height="0.5" fill="#e8e8e8"/><rect x="1.5" y="27.23" width="5" height="1.1" fill="#a0a0a0" opacity="0.8"/><rect x="8.5" y="22.95" width="69.5" height="0.5" fill="#e8e8e8"/><rect x="1.5" y="22.35" width="5" height="1.1" fill="#a0a0a0" opacity="0.8"/><rect x="8.5" y="18.07" width="69.5" height="0.5" fill="#e8e8e8"/><rect x="1.5" y="17.47" width="5" height="1.1" fill="#a0a0a0" opacity="0.8"/><rect x="8.5" y="13.18" width="69.5" height="0.5" fill="#e8e8e8"/><rect x="1.5" y="12.58" width="5" height="1.1" fill="#a0a0a0" opacity="0.8"/><rect x="8.5" y="8.30" width="69.5" height="0.5" fill="#e8e8e8"/><rect x="1.5" y="7.70" width="5" height="1.1" fill="#a0a0a0" opacity="0.8"/><rect x="9.87" y="25.39" width="2.23" height="12.21" fill="#c9c9c9"/><rect x="9.38" y="40.3" width="3.2" height="1" fill="#a0a0a0" opacity="0.8"/><rect x="14.83" y="25.39" width="2.23" height="12.21" fill="#9dc3e6"/><rect x="14.83" y="20.51" width="2.23" height="4.88" fill="#c9c9c9"/><rect x="14.35" y="40.3" width="3.2" height="1" fill="#a0a0a0" opacity="0.8"/><rect x="19.79" y="26.26" width="2.23" height="11.34" fill="#9dc3e6"/><rect x="19.79" y="20.51" width="2.23" height="5.75" fill="#f4b183"/><rect x="19.31" y="40.3" width="3.2" height="1" fill="#a0a0a0" opacity="0.8"/><rect x="24.76" y="29.27" width="2.23" height="8.33" fill="#9dc3e6"/><rect x="24.76" y="26.26" width="2.23" height="3.01" fill="#f4b183"/><rect x="24.27" y="40.3" width="3.2" height="1" fill="#a0a0a0" opacity="0.8"/><rect x="29.72" y="29.27" width="2.23" height="8.33" fill="#9dc3e6"/><rect x="29.72" y="20.84" width="2.23" height="8.44" fill="#c9c9c9"/><rect x="29.24" y="40.3" width="3.2" height="1" fill="#a0a0a0" opacity="0.8"/><rect x="34.69" y="20.84" width="2.23" height="16.76" fill="#9dc3e6"/><rect x="34.69" y="14.30" width="2.23" height="6.54" fill="#c9c9c9"/><rect x="34.20" y="40.3" width="3.2" height="1" fill="#a0a0a0" opacity="0.8"/><rect x="39.65" y="17.33" width="2.23" height="20.27" fill="#9dc3e6"/><rect x="39.65" y="14.30" width="2.23" height="3.03" fill="#f4b183"/><rect x="39.17" y="40.3" width="3.2" height="1" fill="#a0a0a0" opacity="0.8"/><rect x="44.62" y="23.07" width="2.23" height="14.53" fill="#9dc3e6"/><rect x="44.62" y="17.33" width="2.23" height="5.75" fill="#f4b183"/><rect x="44.13" y="40.3" width="3.2" height="1" fill="#a0a0a0" opacity="0.8"/><rect x="49.58" y="26.13" width="2.23" height="11.47" fill="#9dc3e6"/><rect x="49.58" y="23.07" width="2.23" height="3.06" fill="#f4b183"/><rect x="49.10" y="40.3" width="3.2" height="1" fill="#a0a0a0" opacity="0.8"/><rect x="54.54" y="26.13" width="2.23" height="11.47" fill="#9dc3e6"/><rect x="54.54" y="15.44" width="2.23" height="10.69" fill="#c9c9c9"/><rect x="54.06" y="40.3" width="3.2" height="1" fill="#a0a0a0" opacity="0.8"/><rect x="59.51" y="18.48" width="2.23" height="19.12" fill="#9dc3e6"/><rect x="59.51" y="15.44" width="2.23" height="3.03" fill="#f4b183"/><rect x="59.02" y="40.3" width="3.2" height="1" fill="#a0a0a0" opacity="0.8"/><rect x="64.47" y="23.66" width="2.23" height="13.94" fill="#9dc3e6"/><rect x="64.47" y="18.48" width="2.23" height="5.18" fill="#f4b183"/><rect x="63.99" y="40.3" width="3.2" height="1" fill="#a0a0a0" opacity="0.8"/><rect x="69.44" y="23.66" width="2.23" height="13.94" fill="#9dc3e6"/><rect x="69.44" y="13.93" width="2.23" height="9.73" fill="#c9c9c9"/><rect x="68.95" y="40.3" width="3.2" height="1" fill="#a0a0a0" opacity="0.8"/><rect x="74.40" y="13.93" width="2.23" height="23.67" fill="#9dc3e6"/><rect x="73.92" y="40.3" width="3.2" height="1" fill="#a0a0a0" opacity="0.8"/><rect x="32.0" y="43.9" width="1.3" height="1.5" fill="#9dc3e6"/><rect x="33.6" y="44.0" width="3" height="1.1" fill="#a0a0a0" opacity="0.7"/><rect x="38.2" y="43.9" width="1.3" height="1.5" fill="#f4b183"/><rect x="39.8" y="44.0" width="3" height="1.1" fill="#a0a0a0" opacity="0.7"/><rect x="44.4" y="43.9" width="1.3" height="1.5" fill="#c9c9c9"/><rect x="46.0" y="44.0" width="3" height="1.1" fill="#a0a0a0" opacity="0.7"/></svg>
<svg style="left:613px;top:32px" width="80" height="48" viewBox="0 0 80 48"><defs><radialGradient id="rg5" cx="50%" cy="35%" r="75%"><stop offset="0" stop-color="#4a4a4a"/><stop offset="1" stop-color="#262626"/></radialGradient><pattern id="hp5" width="4.2" height="4.2" patternUnits="userSpaceOnUse" patternTransform="rotate(38)"><rect width="4.2" height="0.7" fill="#c4c4c4"/></pattern></defs><rect width="80" height="48" fill="#fff"/><rect x="0.5" y="0.5" width="79" height="47" fill="none" stroke="#f2f2f2"/><text x="40" y="5.1" text-anchor="middle" font-family="Liberation Sans" font-size="4.4" font-weight="bold" fill="#44546a" textLength="14" lengthAdjust="spacingAndGlyphs">Chart Title</text><rect x="8.5" y="37.60" width="69.5" height="0.5" fill="#e8e8e8"/><rect x="1.5" y="37.00" width="5" height="1.1" fill="#a0a0a0" opacity="0.8"/><rect x="8.5" y="32.72" width="69.5" height="0.5" fill="#e8e8e8"/><rect x="1.5" y="32.12" width="5" height="1.1" fill="#a0a0a0" opacity="0.8"/><rect x="8.5" y="27.83" width="69.5" height="0.5" fill="#e8e8e8"/><rect x="1.5" y="27.23" width="5" height="1.1" fill="#a0a0a0" opacity="0.8"/><rect x="8.5" y="22.95" width="69.5" height="0.5" fill="#e8e8e8"/><rect x="1.5" y="22.35" width="5" height="1.1" fill="#a0a0a0" opacity="0.8"/><rect x="8.5" y="18.07" width="69.5" height="0.5" fill="#e8e8e8"/><rect x="1.5" y="17.47" width="5" height="1.1" fill="#a0a0a0" opacity="0.8"/><rect x="8.5" y="13.18" width="69.5" height="0.5" fill="#e8e8e8"/><rect x="1.5" y="12.58" width="5" height="1.1" fill="#a0a0a0" opacity="0.8"/><rect x="8.5" y="8.30" width="69.5" height="0.5" fill="#e8e8e8"/><rect x="1.5" y="7.70" width="5" height="1.1" fill="#a0a0a0" opacity="0.8"/><rect x="9.87" y="25.39" width="2.23" height="12.21" fill="#a5a5a5"/><rect x="9.38" y="40.3" width="3.2" height="1" fill="#a0a0a0" opacity="0.8"/><rect x="14.83" y="25.39" width="2.23" height="12.21" fill="#5b9bd5"/><rect x="14.83" y="20.51" width="2.23" height="4.88" fill="#a5a5a5"/><rect x="14.35" y="40.3" width="3.2" height="1" fill="#a0a0a0" opacity="0.8"/><rect x="19.79" y="26.26" width="2.23" height="11.34" fill="#5b9bd5"/><rect x="19.79" y="20.51" width="2.23" height="5.75" fill="#ed7d31"/><rect x="19.31" y="40.3" width="3.2" height="1" fill="#a0a0a0" opacity="0.8"/><rect x="24.76" y="29.27" width="2.23" height="8.33" fill="#5b9bd5"/><rect x="24.76" y="26.26" width="2.23" height="3.01" fill="#ed7d31"/><rect x="24.27" y="40.3" width="3.2" height="1" fill="#a0a0a0" opacity="0.8"/><rect x="29.72" y="29.27" width="2.23" height="8.33" fill="#5b9bd5"/><rect x="29.72" y="20.84" width="2.23" height="8.44" fill="#a5a5a5"/><rect x="29.24" y="40.3" width="3.2" height="1" fill="#a0a0a0" opacity="0.8"/><rect x="34.69" y="20.84" width="2.23" height="16.76" fill="#5b9bd5"/><rect x="34.69" y="14.30" width="2.23" height="6.54" fill="#a5a5a5"/><rect x="34.20" y="40.3" width="3.2" height="1" fill="#a0a0a0" opacity="0.8"/><rect x="39.65" y="17.33" width="2.23" height="20.27" fill="#5b9bd5"/><rect x="39.65" y="14.30" width="2.23" height="3.03" fill="#ed7d31"/><rect x="39.17" y="40.3" width="3.2" height="1" fill="#a0a0a0" opacity="0.8"/><rect x="44.62" y="23.07" width="2.23" height="14.53" fill="#5b9bd5"/><rect x="44.62" y="17.33" width="2.23" height="5.75" fill="#ed7d31"/><rect x="44.13" y="40.3" width="3.2" height="1" fill="#a0a0a0" opacity="0.8"/><rect x="49.58" y="26.13" width="2.23" height="11.47" fill="#5b9bd5"/><rect x="49.58" y="23.07" width="2.23" height="3.06" fill="#ed7d31"/><rect x="49.10" y="40.3" width="3.2" height="1" fill="#a0a0a0" opacity="0.8"/><rect x="54.54" y="26.13" width="2.23" height="11.47" fill="#5b9bd5"/><rect x="54.54" y="15.44" width="2.23" height="10.69" fill="#a5a5a5"/><rect x="54.06" y="40.3" width="3.2" height="1" fill="#a0a0a0" opacity="0.8"/><rect x="59.51" y="18.48" width="2.23" height="19.12" fill="#5b9bd5"/><rect x="59.51" y="15.44" width="2.23" height="3.03" fill="#ed7d31"/><rect x="59.02" y="40.3" width="3.2" height="1" fill="#a0a0a0" opacity="0.8"/><rect x="64.47" y="23.66" width="2.23" height="13.94" fill="#5b9bd5"/><rect x="64.47" y="18.48" width="2.23" height="5.18" fill="#ed7d31"/><rect x="63.99" y="40.3" width="3.2" height="1" fill="#a0a0a0" opacity="0.8"/><rect x="69.44" y="23.66" width="2.23" height="13.94" fill="#5b9bd5"/><rect x="69.44" y="13.93" width="2.23" height="9.73" fill="#a5a5a5"/><rect x="68.95" y="40.3" width="3.2" height="1" fill="#a0a0a0" opacity="0.8"/><rect x="74.40" y="13.93" width="2.23" height="23.67" fill="#5b9bd5"/><rect x="73.92" y="40.3" width="3.2" height="1" fill="#a0a0a0" opacity="0.8"/><rect x="32.0" y="43.9" width="1.3" height="1.5" fill="#5b9bd5"/><rect x="33.6" y="44.0" width="3" height="1.1" fill="#a0a0a0" opacity="0.7"/><rect x="38.2" y="43.9" width="1.3" height="1.5" fill="#ed7d31"/><rect x="39.8" y="44.0" width="3" height="1.1" fill="#a0a0a0" opacity="0.7"/><rect x="44.4" y="43.9" width="1.3" height="1.5" fill="#a5a5a5"/><rect x="46.0" y="44.0" width="3" height="1.1" fill="#a0a0a0" opacity="0.7"/></svg>
<svg style="left:701px;top:32px" width="80" height="48" viewBox="0 0 80 48"><defs><radialGradient id="rg6" cx="50%" cy="35%" r="75%"><stop offset="0" stop-color="#4a4a4a"/><stop offset="1" stop-color="#262626"/></radialGradient><pattern id="hp6" width="4.2" height="4.2" patternUnits="userSpaceOnUse" patternTransform="rotate(38)"><rect width="4.2" height="0.7" fill="#c4c4c4"/></pattern></defs><rect width="80" height="48" fill="#fff"/><rect x="0.5" y="0.5" width="79" height="47" fill="none" stroke="#f2f2f2"/><text x="40" y="5.1" text-anchor="middle" font-family="Liberation Sans" font-size="4.4" font-weight="normal" fill="#777" textLength="14" lengthAdjust="spacingAndGlyphs">Chart Title</text><rect x="8.5" y="8.3" width="69.5" height="29.3" fill="url(#hp6)"/><rect x="8.5" y="37.60" width="69.5" height="0.5" fill="#e8e8e8"/><rect x="1.5" y="37.00" width="5" height="1.1" fill="#a0a0a0" opacity="0.8"/><rect x="8.5" y="32.72" width="69.5" height="0.5" fill="#e8e8e8"/><rect x="1.5" y="32.12" width="5" height="1.1" fill="#a0a0a0" opacity="0.8"/><rect x="8.5" y="27.83" width="69.5" height="0.5" fill="#e8e8e8"/><rect x="1.5" y="27.23" width="5" height="1.1" fill="#a0a0a0" opacity="0.8"/><rect x="8.5" y="22.95" width="69.5" height="0.5" fill="#e8e8e8"/><rect x="1.5" y="22.35" width="5" height="1.1" fill="#a0a0a0" opacity="0.8"/><rect x="8.5" y="18.07" width="69.5" height="0.5" fill="#e8e8e8"/><rect x="1.5" y="17.47" width="5" height="1.1" fill="#a0a0a0" opacity="0.8"/><rect x="8.5" y="13.18" width="69.5" height="0.5" fill="#e8e8e8"/><rect x="1.5" y="12.58" width="5" height="1.1" fill="#a0a0a0" opacity="0.8"/><rect x="8.5" y="8.30" width="69.5" height="0.5" fill="#e8e8e8"/><rect x="1.5" y="7.70" width="5" height="1.1" fill="#a0a0a0" opacity="0.8"/><rect x="9.87" y="25.39" width="2.23" height="12.21" fill="#a5a5a5"/><rect x="9.38" y="40.3" width="3.2" height="1" fill="#a0a0a0" opacity="0.8"/><rect x="14.83" y="25.39" width="2.23" height="12.21" fill="#5b9bd5"/><rect x="14.83" y="20.51" width="2.23" height="4.88" fill="#a5a5a5"/><rect x="14.35" y="40.3" width="3.2" height="1" fill="#a0a0a0" opacity="0.8"/><rect x="19.79" y="26.26" width="2.23" height="11.34" fill="#5b9bd5"/><rect x="19.79" y="20.51" width="2.23" height="5.75" fill="#ed7d31"/><rect x="19.31" y="40.3" width="3.2" height="1" fill="#a0a0a0" opacity="0.8"/><rect x="24.76" y="29.27" width="2.23" height="8.33" fill="#5b9bd5"/><rect x="24.76" y="26.26" width="2.23" height="3.01" fill="#ed7d31"/><rect x="24.27" y="40.3" width="3.2" height="1" fill="#a0a0a0" opacity="0.8"/><rect x="29.72" y="29.27" width="2.23" height="8.33" fill="#5b9bd5"/><rect x="29.72" y="20.84" width="2.23" height="8.44" fill="#a5a5a5"/><rect x="29.24" y="40.3" width="3.2" height="1" fill="#a0a0a0" opacity="0.8"/><rect x="34.69" y="20.84" width="2.23" height="16.76" fill="#5b9bd5"/><rect x="34.69" y="14.30" width="2.23" height="6.54" fill="#a5a5a5"/><rect x="34.20" y="40.3" width="3.2" height="1" fill="#a0a0a0" opacity="0.8"/><rect x="39.65" y="17.33" width="2.23" height="20.27" fill="#5b9bd5"/><rect x="39.65" y="14.30" width="2.23" height="3.03" fill="#ed7d31"/><rect x="39.17" y="40.3" width="3.2" height="1" fill="#a0a0a0" opacity="0.8"/><rect x="44.62" y="23.07" width="2.23" height="14.53" fill="#5b9bd5"/><rect x="44.62" y="17.33" width="2.23" height="5.75" fill="#ed7d31"/><rect x="44.13" y="40.3" width="3.2" height="1" fill="#a0a0a0" opacity="0.8"/><rect x="49.58" y="26.13" width="2.23" height="11.47" fill="#5b9bd5"/><rect x="49.58" y="23.07" width="2.23" height="3.06" fill="#ed7d31"/><rect x="49.10" y="40.3" width="3.2" height="1" fill="#a0a0a0" opacity="0.8"/><rect x="54.54" y="26.13" width="2.23" height="11.47" fill="#5b9bd5"/><rect x="54.54" y="15.44" width="2.23" height="10.69" fill="#a5a5a5"/><rect x="54.06" y="40.3" width="3.2" height="1" fill="#a0a0a0" opacity="0.8"/><rect x="59.51" y="18.48" width="2.23" height="19.12" fill="#5b9bd5"/><rect x="59.51" y="15.44" width="2.23" height="3.03" fill="#ed7d31"/><rect x="59.02" y="40.3" width="3.2" height="1" fill="#a0a0a0" opacity="0.8"/><rect x="64.47" y="23.66" width="2.23" height="13.94" fill="#5b9bd5"/><rect x="64.47" y="18.48" width="2.23" height="5.18" fill="#ed7d31"/><rect x="63.99" y="40.3" width="3.2" height="1" fill="#a0a0a0" opacity="0.8"/><rect x="69.44" y="23.66" width="2.23" height="13.94" fill="#5b9bd5"/><rect x="69.44" y="13.93" width="2.23" height="9.73" fill="#a5a5a5"/><rect x="68.95" y="40.3" width="3.2" height="1" fill="#a0a0a0" opacity="0.8"/><rect x="74.40" y="13.93" width="2.23" height="23.67" fill="#5b9bd5"/><rect x="73.92" y="40.3" width="3.2" height="1" fill="#a0a0a0" opacity="0.8"/><rect x="32.0" y="43.9" width="1.3" height="1.5" fill="#5b9bd5"/><rect x="33.6" y="44.0" width="3" height="1.1" fill="#a0a0a0" opacity="0.7"/><rect x="38.2" y="43.9" width="1.3" height="1.5" fill="#ed7d31"/><rect x="39.8" y="44.0" width="3" height="1.1" fill="#a0a0a0" opacity="0.7"/><rect x="44.4" y="43.9" width="1.3" height="1.5" fill="#a5a5a5"/><rect x="46.0" y="44.0" width="3" height="1.1" fill="#a0a0a0" opacity="0.7"/></svg>
<svg style="left:789px;top:32px" width="80" height="48" viewBox="0 0 80 48"><defs><radialGradient id="rg7" cx="50%" cy="35%" r="75%"><stop offset="0" stop-color="#4a4a4a"/><stop offset="1" stop-color="#262626"/></radialGradient><pattern id="hp7" width="4.2" height="4.2" patternUnits="userSpaceOnUse" patternTransform="rotate(38)"><rect width="4.2" height="0.7" fill="#c4c4c4"/></pattern></defs><rect width="80" height="48" fill="url(#rg7)"/><text x="40" y="5.1" text-anchor="middle" font-family="Liberation Sans" font-size="4.4" font-weight="bold" fill="#e8e8e8" textLength="14" lengthAdjust="spacingAndGlyphs">Chart Title</text><rect x="8.5" y="37.60" width="69.5" height="0.5" fill="#4e4e4e"/><rect x="1.5" y="37.00" width="5" height="1.1" fill="#bbb" opacity="0.8"/><rect x="8.5" y="32.72" width="69.5" height="0.5" fill="#4e4e4e"/><rect x="1.5" y="32.12" width="5" height="1.1" fill="#bbb" opacity="0.8"/><rect x="8.5" y="27.83" width="69.5" height="0.5" fill="#4e4e4e"/><rect x="1.5" y="27.23" width="5" height="1.1" fill="#bbb" opacity="0.8"/><rect x="8.5" y="22.95" width="69.5" height="0.5" fill="#4e4e4e"/><rect x="1.5" y="22.35" width="5" height="1.1" fill="#bbb" opacity="0.8"/><rect x="8.5" y="18.07" width="69.5" height="0.5" fill="#4e4e4e"/><rect x="1.5" y="17.47" width="5" height="1.1" fill="#bbb" opacity="0.8"/><rect x="8.5" y="13.18" width="69.5" height="0.5" fill="#4e4e4e"/><rect x="1.5" y="12.58" width="5" height="1.1" fill="#bbb" opacity="0.8"/><rect x="8.5" y="8.30" width="69.5" height="0.5" fill="#4e4e4e"/><rect x="1.5" y="7.70" width="5" height="1.1" fill="#bbb" opacity="0.8"/><rect x="9.87" y="25.39" width="2.23" height="12.21" fill="#b0b0b0"/><rect x="9.38" y="40.3" width="3.2" height="1" fill="#bbb" opacity="0.8"/><rect x="14.83" y="25.39" width="2.23" height="12.21" fill="#5b9bd5"/><rect x="14.83" y="20.51" width="2.23" height="4.88" fill="#b0b0b0"/><rect x="14.35" y="40.3" width="3.2" height="1" fill="#bbb" opacity="0.8"/><rect x="19.79" y="26.26" width="2.23" height="11.34" fill="#5b9bd5"/><rect x="19.79" y="20.51" width="2.23" height="5.75" fill="#ed7d31"/><rect x="19.31" y="40.3" width="3.2" height="1" fill="#bbb" opacity="0.8"/><rect x="24.76" y="29.27" width="2.23" height="8.33" fill="#5b9bd5"/><rect x="24.76" y="26.26" width="2.23" height="3.01" fill="#ed7d31"/><rect x="24.27" y="40.3" width="3.2" height="1" fill="#bbb" opacity="0.8"/><rect x="29.72" y="29.27" width="2.23" height="8.33" fill="#5b9bd5"/><rect x="29.72" y="20.84" width="2.23" height="8.44" fill="#b0b0b0"/><rect x="29.24" y="40.3" width="3.2" height="1" fill="#bbb" opacity="0.8"/><rect x="34.69" y="20.84" width="2.23" height="16.76" fill="#5b9bd5"/><rect x="34.69" y="14.30" width="2.23" height="6.54" fill="#b0b0b0"/><rect x="34.20" y="40.3" width="3.2" height="1" fill="#bbb" opacity="0.8"/><rect x="39.65" y="17.33" width="2.23" height="20.27" fill="#5b9bd5"/><rect x="39.65" y="14.30" width="2.23" height="3.03" fill="#ed7d31"/><rect x="39.17" y="40.3" width="3.2" height="1" fill="#bbb" opacity="0.8"/><rect x="44.62" y="23.07" width="2.23" height="14.53" fill="#5b9bd5"/><rect x="44.62" y="17.33" width="2.23" height="5.75" fill="#ed7d31"/><rect x="44.13" y="40.3" width="3.2" height="1" fill="#bbb" opacity="0.8"/><rect x="49.58" y="26.13" width="2.23" height="11.47" fill="#5b9bd5"/><rect x="49.58" y="23.07" width="2.23" height="3.06" fill="#ed7d31"/><rect x="49.10" y="40.3" width="3.2" height="1" fill="#bbb" opacity="0.8"/><rect x="54.54" y="26.13" width="2.23" height="11.47" fill="#5b9bd5"/><rect x="54.54" y="15.44" width="2.23" height="10.69" fill="#b0b0b0"/><rect x="54.06" y="40.3" width="3.2" height="1" fill="#bbb" opacity="0.8"/><rect x="59.51" y="18.48" width="2.23" height="19.12" fill="#5b9bd5"/><rect x="59.51" y="15.44" width="2.23" height="3.03" fill="#ed7d31"/><rect x="59.02" y="40.3" width="3.2" height="1" fill="#bbb" opacity="0.8"/><rect x="64.47" y="23.66" width="2.23" height="13.94" fill="#5b9bd5"/><rect x="64.47" y="18.48" width="2.23" height="5.18" fill="#ed7d31"/><rect x="63.99" y="40.3" width="3.2" height="1" fill="#bbb" opacity="0.8"/><rect x="69.44" y="23.66" width="2.23" height="13.94" fill="#5b9bd5"/><rect x="69.44" y="13.93" width="2.23" height="9.73" fill="#b0b0b0"/><rect x="68.95" y="40.3" width="3.2" height="1" fill="#bbb" opacity="0.8"/><rect x="74.40" y="13.93" width="2.23" height="23.67" fill="#5b9bd5"/><rect x="73.92" y="40.3" width="3.2" height="1" fill="#bbb" opacity="0.8"/><rect x="32.0" y="43.9" width="1.3" height="1.5" fill="#5b9bd5"/><rect x="33.6" y="44.0" width="3" height="1.1" fill="#bbb" opacity="0.7"/><rect x="38.2" y="43.9" width="1.3" height="1.5" fill="#ed7d31"/><rect x="39.8" y="44.0" width="3" height="1.1" fill="#bbb" opacity="0.7"/><rect x="44.4" y="43.9" width="1.3" height="1.5" fill="#b0b0b0"/><rect x="46.0" y="44.0" width="3" height="1.1" fill="#bbb" opacity="0.7"/></svg>
<svg style="left:915px;top:24px" width="100" height="38" viewBox="0 0 100 38"><rect x="6.5" y="4.5" width="28" height="25" fill="#fff" stroke="#7b7b7b"/><rect x="6" y="4" width="29" height="4.5" fill="#7b7b7b"/><path d="M7 13.6h28M7 18.6h28M7 23.5h28M13.6 8.5v21M20.3 8.5v21M27.7 8.5v21" stroke="#b0b0b0" stroke-width="1"/><path d="M20.5 13.5h7.2v10h-11.5M20.5 13.5v10M20.5 18.5h7.2" fill="none" stroke="#e4873c" stroke-width="1.1"/><path d="M12.5 22c0-5 3-8.5 9-8.5" fill="none" stroke="#3f7fc0" stroke-width="2.2"/><path d="M20 10l4.5 3.5-4.5 3.5z" fill="#3f7fc0"/><path d="M9 20.5l3.5 5 3.5-5z" fill="#3f7fc0"/><rect x="63.5" y="5.5" width="28" height="24.5" fill="#fff" stroke="#7b7b7b"/><rect x="63" y="5" width="29" height="4.5" fill="#7b7b7b"/><path d="M64 14.5h27M64 19.5h27M64 24.5h27M70.5 9.5v20M77.5 9.5v20M84.5 9.5v20" stroke="#b0b0b0" stroke-width="1"/><path d="M84.5 17v-3H70.5v10.5h6" fill="none" stroke="#e4873c" stroke-width="1.1"/><rect x="76.5" y="17.5" width="17" height="16" fill="#fff" stroke="#f1f1f1" stroke-width="1"/><rect x="77.5" y="18.5" width="16" height="15" fill="#fff" stroke="#7b7b7b" stroke-width="1.2"/><path d="M79.5 33v-8.5h3V33M82.5 33V21h3v12M85.5 33v-8.5h3V33M88.5 33v-7h3v7" fill="#d0d0d0" stroke="#7b7b7b" stroke-width="0.9"/></svg>
<div class="t" style="left:876.00px;width:120px;text-align:center;top:63.34px;font-size:12px;color:#444;font-weight:normal;">Switch Row/</div>
<div class="t" style="left:876.00px;width:120px;text-align:center;top:79.34px;font-size:12px;color:#444;font-weight:normal;">Column</div>
<div class="t" style="left:933.00px;width:120px;text-align:center;top:63.34px;font-size:12px;color:#444;font-weight:normal;">Select</div>
<div class="t" style="left:933.00px;width:120px;text-align:center;top:79.34px;font-size:12px;color:#444;font-weight:normal;">Data</div>
<div class="t" style="left:897.00px;width:120px;text-align:center;top:98.77px;font-size:11.5px;color:#555;font-weight:normal;">Data</div>
<svg style="left:1040px;top:28px" width="26" height="28" viewBox="0 0 26 28"><rect x="1" y="9" width="7" height="18" fill="#4a7fbb"/><rect x="9" y="1" width="7" height="26" fill="#ecc47c"/><rect x="17" y="6" width="7" height="21" fill="#7b7b7b"/></svg>
<div class="t" style="left:993.00px;width:120px;text-align:center;top:63.34px;font-size:12px;color:#444;font-weight:normal;">Change</div>
<div class="t" style="left:993.00px;width:120px;text-align:center;top:79.34px;font-size:12px;color:#444;font-weight:normal;">Chart Type</div>
<div class="t" style="left:992.00px;width:120px;text-align:center;top:98.77px;font-size:11.5px;color:#555;font-weight:normal;">Type</div>
<svg style="left:1095px;top:24px" width="40" height="36" viewBox="1095 24 40 36"><path d="M1100.5 29.5H1127.5V49.5H1111L1108 53.2H1100.5z" fill="#fff" stroke="#7b7b7b" stroke-width="1.1"/><path d="M1111 49.5q-1 0-1 1.5V52q0 1.2 1.2 1.2H1116.5L1119.8 49.5" fill="#fff" stroke="#7b7b7b" stroke-width="1.1"/><rect x="1105.5" y="37.5" width="4" height="9" fill="#fff" stroke="#7b7b7b" stroke-width="1.1"/><rect x="1109.5" y="32.5" width="4" height="14" fill="#d6d6d6" stroke="#7b7b7b" stroke-width="1.1"/><rect x="1115.5" y="36.5" width="4" height="10" fill="#fff" stroke="#7b7b7b" stroke-width="1.1"/><rect x="1119.5" y="39.5" width="4" height="7" fill="#d6d6d6" stroke="#7b7b7b" stroke-width="1.1"/></svg>
<div class="t" style="left:1054.00px;width:120px;text-align:center;top:63.34px;font-size:12px;color:#444;font-weight:normal;">Move</div>
<div class="t" style="left:1054.00px;width:120px;text-align:center;top:79.34px;font-size:12px;color:#444;font-weight:normal;">Chart</div>
<div class="t" style="left:1054.00px;width:120px;text-align:center;top:98.77px;font-size:11.5px;color:#555;font-weight:normal;">Location</div>
<div class="a" style="left:0px;top:113px;width:1320px;height:46px;background:#e6e6e6"></div>
<div class="a" style="left:4px;top:123px;width:102px;height:26px;background:#fff;border:1px solid #c6c6c6"></div>
<div class="t" style="left:11.50px;top:130.22px;font-size:12.5px;color:#262626;font-weight:normal;">Chart 10</div>
<svg style="left:92px;top:133px" width="8" height="5"><path d="M0 0h8L4 4.5z" fill="#777"/></svg>
<div class="a" style="left:120.5px;top:131px;width:2px;height:2px;background:#a0a0a0"></div>
<div class="a" style="left:120.5px;top:135.5px;width:2px;height:2px;background:#a0a0a0"></div>
<div class="a" style="left:120.5px;top:140px;width:2px;height:2px;background:#a0a0a0"></div>
<div class="a" style="left:136px;top:123px;width:110px;height:26px;background:#fff;border:1px solid #c6c6c6"></div>
<svg style="left:149px;top:130px" width="12" height="12"><path d="M1 1l10 10M11 1L1 11" stroke="#b4b4b4" stroke-width="1.7"/></svg>
<svg style="left:184px;top:130px" width="14" height="12"><path d="M1 6l4 4 8-9" fill="none" stroke="#cdcdcd" stroke-width="2.3"/></svg>
<svg style="left:215px;top:125px" width="24" height="22" viewBox="215 125 24 22"><path d="M220.8 142.2C222.6 142.4 223.4 141 223.8 139L225.4 132.6C225.9 130.6 227 129.8 229.6 130.3" fill="none" stroke="#666" stroke-width="1.5"/><path d="M222.6 134.6H227.8" stroke="#666" stroke-width="1.3"/><path d="M226.8 135.6C228.2 135.4 228.6 136.4 229.4 138.4C230.2 140.4 230.8 141.2 232.6 140.8M232.6 135.4C231.4 135.6 229.2 139 228.6 140C228 141 227.4 141.2 226.6 140.9" fill="none" stroke="#666" stroke-width="1.3"/></svg>
<div class="a" style="left:249px;top:123px;width:1071px;height:26px;background:#fff;border:1px solid #c6c6c6;border-right:none"></div>
<div class="a" style="left:0px;top:159px;width:1320px;height:29px;background:#e6e6e6"></div>
<div class="a" style="left:0px;top:188px;width:41px;height:675px;background:#e6e6e6"></div>
<svg style="left:16px;top:163px" width="23" height="22"><path d="M22 0v22H0z" fill="#bcbcbc"/></svg>
<div class="a" style="left:0px;top:188px;width:1320px;height:1px;background:#9b9b9b"></div>
<div class="a" style="left:41px;top:159px;width:1px;height:704px;background:#9b9b9b"></div>
<div class="a" style="left:143px;top:159px;width:1px;height:29px;background:#c9c9c9"></div>
<div class="a" style="left:245px;top:159px;width:1px;height:29px;background:#c9c9c9"></div>
<div class="a" style="left:347px;top:159px;width:1px;height:29px;background:#c9c9c9"></div>
<div class="a" style="left:449px;top:159px;width:1px;height:29px;background:#c9c9c9"></div>
<div class="a" style="left:551px;top:159px;width:1px;height:29px;background:#c9c9c9"></div>
<div class="a" style="left:653px;top:159px;width:1px;height:29px;background:#c9c9c9"></div>
<div class="a" style="left:755px;top:159px;width:1px;height:29px;background:#c9c9c9"></div>
<div class="a" style="left:857px;top:159px;width:1px;height:29px;background:#c9c9c9"></div>
<div class="a" style="left:959px;top:159px;width:1px;height:29px;background:#c9c9c9"></div>
<div class="a" style="left:1061px;top:159px;width:1px;height:29px;background:#c9c9c9"></div>
<div class="a" style="left:1163px;top:159px;width:1px;height:29px;background:#c9c9c9"></div>
<div class="a" style="left:1265px;top:159px;width:1px;height:29px;background:#c9c9c9"></div>
<div class="t" style="left:62.50px;width:60px;text-align:center;top:165.80px;font-size:21.5px;color:#000;font-weight:normal;">A</div>
<div class="t" style="left:164.50px;width:60px;text-align:center;top:165.80px;font-size:21.5px;color:#000;font-weight:normal;">B</div>
<div class="t" style="left:266.50px;width:60px;text-align:center;top:165.80px;font-size:21.5px;color:#000;font-weight:normal;">C</div>
<div class="t" style="left:368.50px;width:60px;text-align:center;top:165.80px;font-size:21.5px;color:#000;font-weight:normal;">D</div>
<div class="t" style="left:470.50px;width:60px;text-align:center;top:165.80px;font-size:21.5px;color:#000;font-weight:normal;">E</div>
<div class="t" style="left:572.50px;width:60px;text-align:center;top:165.80px;font-size:21.5px;color:#000;font-weight:normal;">F</div>
<div class="t" style="left:674.50px;width:60px;text-align:center;top:165.80px;font-size:21.5px;color:#000;font-weight:normal;">G</div>
<div class="t" style="left:776.50px;width:60px;text-align:center;top:165.80px;font-size:21.5px;color:#000;font-weight:normal;">H</div>
<div class="t" style="left:878.50px;width:60px;text-align:center;top:165.80px;font-size:21.5px;color:#000;font-weight:normal;">I</div>
<div class="t" style="left:980.50px;width:60px;text-align:center;top:165.80px;font-size:21.5px;color:#000;font-weight:normal;">J</div>
<div class="t" style="left:1082.50px;width:60px;text-align:center;top:165.80px;font-size:21.5px;color:#000;font-weight:normal;">K</div>
<div class="t" style="left:1184.50px;width:60px;text-align:center;top:165.80px;font-size:21.5px;color:#000;font-weight:normal;">L</div>
<div class="t" style="left:1286.50px;width:60px;text-align:center;top:165.80px;font-size:21.5px;color:#000;font-weight:normal;">M</div>
<div class="a" style="left:0px;top:220px;width:41px;height:1px;background:#c9c9c9"></div>
<div class="t" style="left:0.50px;width:40px;text-align:center;top:195.80px;font-size:21.5px;color:#000;font-weight:normal;">1</div>
<div class="a" style="left:0px;top:252px;width:41px;height:1px;background:#c9c9c9"></div>
<div class="t" style="left:0.50px;width:40px;text-align:center;top:227.80px;font-size:21.5px;color:#000;font-weight:normal;">2</div>
<div class="a" style="left:0px;top:286px;width:41px;height:1px;background:#c9c9c9"></div>
<div class="t" style="left:0.50px;width:40px;text-align:center;top:261.80px;font-size:21.5px;color:#000;font-weight:normal;">3</div>
<div class="a" style="left:0px;top:320px;width:41px;height:1px;background:#c9c9c9"></div>
<div class="t" style="left:0.50px;width:40px;text-align:center;top:295.80px;font-size:21.5px;color:#000;font-weight:normal;">4</div>
<div class="a" style="left:0px;top:354px;width:41px;height:1px;background:#c9c9c9"></div>
<div class="t" style="left:0.50px;width:40px;text-align:center;top:329.80px;font-size:21.5px;color:#000;font-weight:normal;">5</div>
<div class="a" style="left:0px;top:388px;width:41px;height:1px;background:#c9c9c9"></div>
<div class="t" style="left:0.50px;width:40px;text-align:center;top:363.80px;font-size:21.5px;color:#000;font-weight:normal;">6</div>
<div class="a" style="left:0px;top:422px;width:41px;height:1px;background:#c9c9c9"></div>
<div class="t" style="left:0.50px;width:40px;text-align:center;top:397.80px;font-size:21.5px;color:#000;font-weight:normal;">7</div>
<div class="a" style="left:0px;top:456px;width:41px;height:1px;background:#c9c9c9"></div>
<div class="t" style="left:0.50px;width:40px;text-align:center;top:431.80px;font-size:21.5px;color:#000;font-weight:normal;">8</div>
<div class="a" style="left:0px;top:490px;width:41px;height:1px;background:#c9c9c9"></div>
<div class="t" style="left:0.50px;width:40px;text-align:center;top:465.80px;font-size:21.5px;color:#000;font-weight:normal;">9</div>
<div class="a" style="left:0px;top:524px;width:41px;height:1px;background:#c9c9c9"></div>
<div class="t" style="left:0.50px;width:40px;text-align:center;top:499.80px;font-size:21.5px;color:#000;font-weight:normal;">10</div>
<div class="a" style="left:0px;top:558px;width:41px;height:1px;background:#c9c9c9"></div>
<div class="t" style="left:0.50px;width:40px;text-align:center;top:533.80px;font-size:21.5px;color:#000;font-weight:normal;">11</div>
<div class="a" style="left:0px;top:592px;width:41px;height:1px;background:#c9c9c9"></div>
<div class="t" style="left:0.50px;width:40px;text-align:center;top:567.80px;font-size:21.5px;color:#000;font-weight:normal;">12</div>
<div class="a" style="left:0px;top:626px;width:41px;height:1px;background:#c9c9c9"></div>
<div class="t" style="left:0.50px;width:40px;text-align:center;top:601.80px;font-size:21.5px;color:#000;font-weight:normal;">13</div>
<div class="a" style="left:0px;top:660px;width:41px;height:1px;background:#c9c9c9"></div>
<div class="t" style="left:0.50px;width:40px;text-align:center;top:635.80px;font-size:21.5px;color:#000;font-weight:normal;">14</div>
<div class="a" style="left:0px;top:694px;width:41px;height:1px;background:#c9c9c9"></div>
<div class="t" style="left:0.50px;width:40px;text-align:center;top:669.80px;font-size:21.5px;color:#000;font-weight:normal;">15</div>
<div class="a" style="left:0px;top:728px;width:41px;height:1px;background:#c9c9c9"></div>
<div class="t" style="left:0.50px;width:40px;text-align:center;top:703.80px;font-size:21.5px;color:#000;font-weight:normal;">16</div>
<div class="a" style="left:0px;top:760px;width:41px;height:1px;background:#c9c9c9"></div>
<div class="t" style="left:0.50px;width:40px;text-align:center;top:735.80px;font-size:21.5px;color:#000;font-weight:normal;">17</div>
<div class="a" style="left:0px;top:792px;width:41px;height:1px;background:#c9c9c9"></div>
<div class="t" style="left:0.50px;width:40px;text-align:center;top:767.80px;font-size:21.5px;color:#000;font-weight:normal;">18</div>
<div class="a" style="left:0px;top:824px;width:41px;height:1px;background:#c9c9c9"></div>
<div class="t" style="left:0.50px;width:40px;text-align:center;top:799.80px;font-size:21.5px;color:#000;font-weight:normal;">19</div>
<div class="a" style="left:0px;top:856px;width:41px;height:1px;background:#c9c9c9"></div>
<div class="t" style="left:0.50px;width:40px;text-align:center;top:831.80px;font-size:21.5px;color:#000;font-weight:normal;">20</div>
<div class="a" style="left:42px;top:253px;width:101px;height:475px;background:#f0edf8"></div>
<div class="a" style="left:144px;top:221px;width:305px;height:31px;background:#f9e7e8"></div>
<div class="a" style="left:144px;top:253px;width:305px;height:475px;background:#e8eef9"></div>
<div class="a" style="left:143px;top:221px;width:1px;height:642px;background:#d9d9d9"></div>
<div class="a" style="left:245px;top:221px;width:1px;height:642px;background:#d9d9d9"></div>
<div class="a" style="left:347px;top:221px;width:1px;height:642px;background:#d9d9d9"></div>
<div class="a" style="left:449px;top:221px;width:1px;height:642px;background:#d9d9d9"></div>
<div class="a" style="left:551px;top:189px;width:1px;height:674px;background:#d9d9d9"></div>
<div class="a" style="left:653px;top:189px;width:1px;height:674px;background:#d9d9d9"></div>
<div class="a" style="left:755px;top:189px;width:1px;height:674px;background:#d9d9d9"></div>
<div class="a" style="left:857px;top:189px;width:1px;height:674px;background:#d9d9d9"></div>
<div class="a" style="left:959px;top:189px;width:1px;height:674px;background:#d9d9d9"></div>
<div class="a" style="left:1061px;top:189px;width:1px;height:674px;background:#d9d9d9"></div>
<div class="a" style="left:1163px;top:189px;width:1px;height:674px;background:#d9d9d9"></div>
<div class="a" style="left:1265px;top:189px;width:1px;height:674px;background:#d9d9d9"></div>
<div class="a" style="left:42px;top:220px;width:1278px;height:1px;background:#d9d9d9"></div>
<div class="a" style="left:42px;top:252px;width:1278px;height:1px;background:#d9d9d9"></div>
<div class="a" style="left:42px;top:286px;width:1278px;height:1px;background:#d9d9d9"></div>
<div class="a" style="left:42px;top:320px;width:1278px;height:1px;background:#d9d9d9"></div>
<div class="a" style="left:42px;top:354px;width:1278px;height:1px;background:#d9d9d9"></div>
<div class="a" style="left:42px;top:388px;width:1278px;height:1px;background:#d9d9d9"></div>
<div class="a" style="left:42px;top:422px;width:1278px;height:1px;background:#d9d9d9"></div>
<div class="a" style="left:42px;top:456px;width:1278px;height:1px;background:#d9d9d9"></div>
<div class="a" style="left:42px;top:490px;width:1278px;height:1px;background:#d9d9d9"></div>
<div class="a" style="left:42px;top:524px;width:1278px;height:1px;background:#d9d9d9"></div>
<div class="a" style="left:42px;top:558px;width:1278px;height:1px;background:#d9d9d9"></div>
<div class="a" style="left:42px;top:592px;width:1278px;height:1px;background:#d9d9d9"></div>
<div class="a" style="left:42px;top:626px;width:1278px;height:1px;background:#d9d9d9"></div>
<div class="a" style="left:42px;top:660px;width:1278px;height:1px;background:#d9d9d9"></div>
<div class="a" style="left:42px;top:694px;width:1278px;height:1px;background:#d9d9d9"></div>
<div class="a" style="left:42px;top:728px;width:1278px;height:1px;background:#d9d9d9"></div>
<div class="a" style="left:42px;top:760px;width:1278px;height:1px;background:#d9d9d9"></div>
<div class="a" style="left:42px;top:792px;width:1278px;height:1px;background:#d9d9d9"></div>
<div class="a" style="left:42px;top:824px;width:1278px;height:1px;background:#d9d9d9"></div>
<div class="a" style="left:42px;top:856px;width:1278px;height:1px;background:#d9d9d9"></div>
<div class="a" style="left:42px;top:220px;width:509px;height:1px;background:#000"></div>
<div class="a" style="left:42px;top:252px;width:509px;height:1px;background:#000"></div>
<div class="a" style="left:42px;top:286px;width:509px;height:1px;background:#000"></div>
<div class="a" style="left:42px;top:320px;width:509px;height:1px;background:#000"></div>
<div class="a" style="left:42px;top:354px;width:509px;height:1px;background:#000"></div>
<div class="a" style="left:42px;top:388px;width:509px;height:1px;background:#000"></div>
<div class="a" style="left:42px;top:422px;width:509px;height:1px;background:#000"></div>
<div class="a" style="left:42px;top:456px;width:509px;height:1px;background:#000"></div>
<div class="a" style="left:42px;top:490px;width:509px;height:1px;background:#000"></div>
<div class="a" style="left:42px;top:524px;width:509px;height:1px;background:#000"></div>
<div class="a" style="left:42px;top:558px;width:509px;height:1px;background:#000"></div>
<div class="a" style="left:42px;top:592px;width:509px;height:1px;background:#000"></div>
<div class="a" style="left:42px;top:626px;width:509px;height:1px;background:#000"></div>
<div class="a" style="left:42px;top:660px;width:509px;height:1px;background:#000"></div>
<div class="a" style="left:42px;top:694px;width:509px;height:1px;background:#000"></div>
<div class="a" style="left:42px;top:728px;width:509px;height:1px;background:#000"></div>
<div class="a" style="left:143px;top:220px;width:1px;height:509px;background:#000"></div>
<div class="a" style="left:245px;top:220px;width:1px;height:509px;background:#000"></div>
<div class="a" style="left:347px;top:220px;width:1px;height:509px;background:#000"></div>
<div class="a" style="left:449px;top:220px;width:1px;height:509px;background:#000"></div>
<div class="a" style="left:551px;top:220px;width:1px;height:509px;background:#000"></div>
<div class="a" style="left:41px;top:220px;width:1px;height:509px;background:#9b9b9b"></div>
<div class="a" style="left:143px;top:219px;width:307px;height:2px;background:#c42b34"></div>
<div class="a" style="left:143px;top:251px;width:307px;height:2px;background:#c42b34"></div>
<div class="a" style="left:143px;top:219px;width:2px;height:34px;background:#c42b34"></div>
<div class="a" style="left:448px;top:219px;width:2px;height:34px;background:#c42b34"></div>
<div class="a" style="left:41px;top:251px;width:103px;height:2px;background:#7e52c2"></div>
<div class="a" style="left:41px;top:728px;width:103px;height:2px;background:#7e52c2"></div>
<div class="a" style="left:143px;top:251px;width:2px;height:478px;background:#7e52c2"></div>
<div class="a" style="left:144px;top:728px;width:306px;height:2px;background:#2f66cc"></div>
<div class="a" style="left:449px;top:253px;width:2px;height:476px;background:#2f66cc"></div>
<div class="a" style="left:141px;top:217px;width:5px;height:5px;background:#c42b34"></div>
<div class="a" style="left:446px;top:217px;width:5px;height:5px;background:#c42b34"></div>
<div class="a" style="left:446px;top:249px;width:5px;height:5px;background:#c42b34"></div>
<div class="a" style="left:141px;top:249px;width:5px;height:5px;background:#7e52c2"></div>
<div class="a" style="left:40px;top:249px;width:3px;height:5px;background:#7e52c2"></div>
<div class="a" style="left:141px;top:727px;width:5px;height:5px;background:#7e52c2"></div>
<div class="a" style="left:40px;top:727px;width:3px;height:5px;background:#7e52c2"></div>
<div class="a" style="left:447px;top:727px;width:5px;height:5px;background:#2f66cc"></div>
<div class="t" style="left:123.50px;width:340px;text-align:center;top:195.38px;font-size:22px;color:#000;font-weight:bold;transform:scaleX(.895)">Sales of XYZ company in 2021</div>
<div class="t" style="left:146.00px;top:227.38px;font-size:22px;color:#000;font-weight:normal;">Base</div>
<div class="t" style="left:248.00px;top:227.38px;font-size:22px;color:#000;font-weight:normal;">Fall</div>
<div class="t" style="left:350.00px;top:227.38px;font-size:22px;color:#000;font-weight:normal;">Rise</div>
<div class="t" style="left:452.00px;top:227.38px;font-size:22px;color:#000;font-weight:normal;">Sales</div>
<div class="t" style="left:44.00px;top:261.38px;font-size:22px;color:#000;font-weight:normal;">Start</div>
<div class="t" style="left:254.00px;width:90px;text-align:right;top:261.38px;font-size:22px;color:#000;font-weight:normal;">0</div>
<div class="t" style="left:356.00px;width:90px;text-align:right;top:261.38px;font-size:22px;color:#000;font-weight:normal;">5000</div>
<div class="t" style="left:458.00px;width:90px;text-align:right;top:261.38px;font-size:22px;color:#000;font-weight:normal;">5000</div>
<div class="t" style="left:44.00px;top:295.38px;font-size:22px;color:#000;font-weight:normal;">Jan</div>
<div class="t" style="left:152.00px;width:90px;text-align:right;top:295.38px;font-size:22px;color:#000;font-weight:normal;">5000</div>
<div class="t" style="left:254.00px;width:90px;text-align:right;top:295.38px;font-size:22px;color:#000;font-weight:normal;">0</div>
<div class="t" style="left:356.00px;width:90px;text-align:right;top:295.38px;font-size:22px;color:#000;font-weight:normal;">2000</div>
<div class="t" style="left:458.00px;width:90px;text-align:right;top:295.38px;font-size:22px;color:#000;font-weight:normal;">2000</div>
<div class="t" style="left:44.00px;top:329.38px;font-size:22px;color:#000;font-weight:normal;">Feb</div>
<div class="t" style="left:152.00px;width:90px;text-align:right;top:329.38px;font-size:22px;color:#000;font-weight:normal;">4644</div>
<div class="t" style="left:254.00px;width:90px;text-align:right;top:329.38px;font-size:22px;color:#000;font-weight:normal;">2356</div>
<div class="t" style="left:356.00px;width:90px;text-align:right;top:329.38px;font-size:22px;color:#000;font-weight:normal;">0</div>
<div class="t" style="left:458.00px;width:90px;text-align:right;top:329.38px;font-size:22px;color:#000;font-weight:normal;">-2356</div>
<div class="t" style="left:44.00px;top:363.38px;font-size:22px;color:#000;font-weight:normal;">Mar</div>
<div class="t" style="left:152.00px;width:90px;text-align:right;top:363.38px;font-size:22px;color:#000;font-weight:normal;">3410</div>
<div class="t" style="left:254.00px;width:90px;text-align:right;top:363.38px;font-size:22px;color:#000;font-weight:normal;">1234</div>
<div class="t" style="left:356.00px;width:90px;text-align:right;top:363.38px;font-size:22px;color:#000;font-weight:normal;">0</div>
<div class="t" style="left:44.00px;top:397.38px;font-size:22px;color:#000;font-weight:normal;">Apr</div>
<div class="t" style="left:152.00px;width:90px;text-align:right;top:397.38px;font-size:22px;color:#000;font-weight:normal;">3410</div>
<div class="t" style="left:254.00px;width:90px;text-align:right;top:397.38px;font-size:22px;color:#000;font-weight:normal;">0</div>
<div class="t" style="left:356.00px;width:90px;text-align:right;top:397.38px;font-size:22px;color:#000;font-weight:normal;">3456</div>
<div class="t" style="left:44.00px;top:431.38px;font-size:22px;color:#000;font-weight:normal;">May</div>
<div class="t" style="left:152.00px;width:90px;text-align:right;top:431.38px;font-size:22px;color:#000;font-weight:normal;">6866</div>
<div class="t" style="left:254.00px;width:90px;text-align:right;top:431.38px;font-size:22px;color:#000;font-weight:normal;">0</div>
<div class="t" style="left:356.00px;width:90px;text-align:right;top:431.38px;font-size:22px;color:#000;font-weight:normal;">2678</div>
<div class="t" style="left:44.00px;top:465.38px;font-size:22px;color:#000;font-weight:normal;">Jun</div>
<div class="t" style="left:152.00px;width:90px;text-align:right;top:465.38px;font-size:22px;color:#000;font-weight:normal;">8302</div>
<div class="t" style="left:254.00px;width:90px;text-align:right;top:465.38px;font-size:22px;color:#000;font-weight:normal;">1242</div>
<div class="t" style="left:356.00px;width:90px;text-align:right;top:465.38px;font-size:22px;color:#000;font-weight:normal;">0</div>
<div class="t" style="left:44.00px;top:499.38px;font-size:22px;color:#000;font-weight:normal;">Jul</div>
<div class="t" style="left:152.00px;width:90px;text-align:right;top:499.38px;font-size:22px;color:#000;font-weight:normal;">5949</div>
<div class="t" style="left:254.00px;width:90px;text-align:right;top:499.38px;font-size:22px;color:#000;font-weight:normal;">2353</div>
<div class="t" style="left:356.00px;width:90px;text-align:right;top:499.38px;font-size:22px;color:#000;font-weight:normal;">0</div>
<div class="t" style="left:44.00px;top:533.38px;font-size:22px;color:#000;font-weight:normal;">Aug</div>
<div class="t" style="left:152.00px;width:90px;text-align:right;top:533.38px;font-size:22px;color:#000;font-weight:normal;">4696</div>
<div class="t" style="left:254.00px;width:90px;text-align:right;top:533.38px;font-size:22px;color:#000;font-weight:normal;">1253</div>
<div class="t" style="left:356.00px;width:90px;text-align:right;top:533.38px;font-size:22px;color:#000;font-weight:normal;">0</div>
<div class="t" style="left:44.00px;top:567.38px;font-size:22px;color:#000;font-weight:normal;">Sep</div>
<div class="t" style="left:152.00px;width:90px;text-align:right;top:567.38px;font-size:22px;color:#000;font-weight:normal;">4696</div>
<div class="t" style="left:254.00px;width:90px;text-align:right;top:567.38px;font-size:22px;color:#000;font-weight:normal;">0</div>
<div class="t" style="left:356.00px;width:90px;text-align:right;top:567.38px;font-size:22px;color:#000;font-weight:normal;">4378</div>
<div class="t" style="left:44.00px;top:601.38px;font-size:22px;color:#000;font-weight:normal;">Oct</div>
<div class="t" style="left:152.00px;width:90px;text-align:right;top:601.38px;font-size:22px;color:#000;font-weight:normal;">7831</div>
<div class="t" style="left:254.00px;width:90px;text-align:right;top:601.38px;font-size:22px;color:#000;font-weight:normal;">1243</div>
<div class="t" style="left:356.00px;width:90px;text-align:right;top:601.38px;font-size:22px;color:#000;font-weight:normal;">0</div>
<div class="t" style="left:44.00px;top:635.38px;font-size:22px;color:#000;font-weight:normal;">Nov</div>
<div class="t" style="left:152.00px;width:90px;text-align:right;top:635.38px;font-size:22px;color:#000;font-weight:normal;">5708</div>
<div class="t" style="left:254.00px;width:90px;text-align:right;top:635.38px;font-size:22px;color:#000;font-weight:normal;">2123</div>
<div class="t" style="left:356.00px;width:90px;text-align:right;top:635.38px;font-size:22px;color:#000;font-weight:normal;">0</div>
<div class="t" style="left:44.00px;top:669.38px;font-size:22px;color:#000;font-weight:normal;">Dec</div>
<div class="t" style="left:152.00px;width:90px;text-align:right;top:669.38px;font-size:22px;color:#000;font-weight:normal;">5708</div>
<div class="t" style="left:254.00px;width:90px;text-align:right;top:669.38px;font-size:22px;color:#000;font-weight:normal;">0</div>
<div class="t" style="left:356.00px;width:90px;text-align:right;top:669.38px;font-size:22px;color:#000;font-weight:normal;">3987</div>
<div class="t" style="left:44.00px;top:703.38px;font-size:22px;color:#000;font-weight:normal;">End</div>
<div class="t" style="left:152.00px;width:90px;text-align:right;top:703.38px;font-size:22px;color:#000;font-weight:normal;">9695</div>
<div class="a" style="left:464px;top:354px;width:768px;height:462px;background:#fff"></div>
<svg style="left:0;top:0" width="1320" height="863"><rect x="464.25" y="355" width="767" height="460.5" fill="none" stroke="#9a9a9a" stroke-width="1.5"/></svg>
<div class="t" style="left:697.50px;width:300px;text-align:center;top:377.22px;font-size:27.5px;color:#595959;font-weight:normal;">Chart Title</div>
<div class="a" style="left:544px;top:716px;width:664px;height:2px;background:#d4d4d4"></div>
<div class="t" style="left:446.50px;width:80px;text-align:right;top:709.39px;font-size:17.5px;color:#595959;font-weight:normal;">0</div>
<div class="a" style="left:544px;top:669px;width:664px;height:2px;background:#d4d4d4"></div>
<div class="t" style="left:446.50px;width:80px;text-align:right;top:662.19px;font-size:17.5px;color:#595959;font-weight:normal;">2000</div>
<div class="a" style="left:544px;top:622px;width:664px;height:2px;background:#d4d4d4"></div>
<div class="t" style="left:446.50px;width:80px;text-align:right;top:614.99px;font-size:17.5px;color:#595959;font-weight:normal;">4000</div>
<div class="a" style="left:544px;top:574px;width:664px;height:2px;background:#d4d4d4"></div>
<div class="t" style="left:446.50px;width:80px;text-align:right;top:567.79px;font-size:17.5px;color:#595959;font-weight:normal;">6000</div>
<div class="a" style="left:544px;top:527px;width:664px;height:2px;background:#d4d4d4"></div>
<div class="t" style="left:446.50px;width:80px;text-align:right;top:520.59px;font-size:17.5px;color:#595959;font-weight:normal;">8000</div>
<div class="a" style="left:544px;top:480px;width:664px;height:2px;background:#d4d4d4"></div>
<div class="t" style="left:446.50px;width:80px;text-align:right;top:473.39px;font-size:17.5px;color:#595959;font-weight:normal;">10000</div>
<div class="a" style="left:544px;top:433px;width:664px;height:2px;background:#d4d4d4"></div>
<div class="t" style="left:446.50px;width:80px;text-align:right;top:426.19px;font-size:17.5px;color:#595959;font-weight:normal;">12000</div>
<div class="a" style="left:558px;top:599px;width:19px;height:118px;background:#a5a5a5"></div>
<div class="t" style="left:537.71px;width:60px;text-align:center;top:734.19px;font-size:17.5px;color:#595959;font-weight:normal;">Start</div>
<div class="a" style="left:606px;top:599px;width:19px;height:118px;background:#5b9bd5"></div>
<div class="a" style="left:606px;top:552px;width:19px;height:47px;background:#a5a5a5"></div>
<div class="t" style="left:585.14px;width:60px;text-align:center;top:734.19px;font-size:17.5px;color:#595959;font-weight:normal;">Jan</div>
<div class="a" style="left:653px;top:607px;width:19px;height:110px;background:#5b9bd5"></div>
<div class="a" style="left:653px;top:552px;width:19px;height:55px;background:#ed7d31"></div>
<div class="t" style="left:632.57px;width:60px;text-align:center;top:734.19px;font-size:17.5px;color:#595959;font-weight:normal;">Feb</div>
<div class="a" style="left:700px;top:636px;width:19px;height:81px;background:#5b9bd5"></div>
<div class="a" style="left:700px;top:607px;width:19px;height:29px;background:#ed7d31"></div>
<div class="t" style="left:680.00px;width:60px;text-align:center;top:734.19px;font-size:17.5px;color:#595959;font-weight:normal;">Mar</div>
<div class="a" style="left:748px;top:636px;width:19px;height:81px;background:#5b9bd5"></div>
<div class="a" style="left:748px;top:555px;width:19px;height:81px;background:#a5a5a5"></div>
<div class="t" style="left:727.43px;width:60px;text-align:center;top:734.19px;font-size:17.5px;color:#595959;font-weight:normal;">Apr</div>
<div class="a" style="left:795px;top:555px;width:19px;height:162px;background:#5b9bd5"></div>
<div class="a" style="left:795px;top:492px;width:19px;height:63px;background:#a5a5a5"></div>
<div class="t" style="left:774.86px;width:60px;text-align:center;top:734.19px;font-size:17.5px;color:#595959;font-weight:normal;">May</div>
<div class="a" style="left:843px;top:521px;width:19px;height:196px;background:#5b9bd5"></div>
<div class="a" style="left:843px;top:492px;width:19px;height:29px;background:#ed7d31"></div>
<div class="t" style="left:822.29px;width:60px;text-align:center;top:734.19px;font-size:17.5px;color:#595959;font-weight:normal;">Jun</div>
<div class="a" style="left:890px;top:577px;width:19px;height:140px;background:#5b9bd5"></div>
<div class="a" style="left:890px;top:521px;width:19px;height:56px;background:#ed7d31"></div>
<div class="t" style="left:869.71px;width:60px;text-align:center;top:734.19px;font-size:17.5px;color:#595959;font-weight:normal;">Jul</div>
<div class="a" style="left:938px;top:606px;width:19px;height:111px;background:#5b9bd5"></div>
<div class="a" style="left:938px;top:577px;width:19px;height:29px;background:#ed7d31"></div>
<div class="t" style="left:917.14px;width:60px;text-align:center;top:734.19px;font-size:17.5px;color:#595959;font-weight:normal;">Aug</div>
<div class="a" style="left:985px;top:606px;width:19px;height:111px;background:#5b9bd5"></div>
<div class="a" style="left:985px;top:503px;width:19px;height:103px;background:#a5a5a5"></div>
<div class="t" style="left:964.57px;width:60px;text-align:center;top:734.19px;font-size:17.5px;color:#595959;font-weight:normal;">Sep</div>
<div class="a" style="left:1032px;top:532px;width:19px;height:185px;background:#5b9bd5"></div>
<div class="a" style="left:1032px;top:503px;width:19px;height:29px;background:#ed7d31"></div>
<div class="t" style="left:1012.00px;width:60px;text-align:center;top:734.19px;font-size:17.5px;color:#595959;font-weight:normal;">Oct</div>
<div class="a" style="left:1080px;top:582px;width:19px;height:135px;background:#5b9bd5"></div>
<div class="a" style="left:1080px;top:532px;width:19px;height:50px;background:#ed7d31"></div>
<div class="t" style="left:1059.43px;width:60px;text-align:center;top:734.19px;font-size:17.5px;color:#595959;font-weight:normal;">Nov</div>
<div class="a" style="left:1127px;top:582px;width:19px;height:135px;background:#5b9bd5"></div>
<div class="a" style="left:1127px;top:488px;width:19px;height:94px;background:#a5a5a5"></div>
<div class="t" style="left:1106.86px;width:60px;text-align:center;top:734.19px;font-size:17.5px;color:#595959;font-weight:normal;">Dec</div>
<div class="a" style="left:1175px;top:488px;width:19px;height:229px;background:#5b9bd5"></div>
<div class="t" style="left:1154.29px;width:60px;text-align:center;top:734.19px;font-size:17.5px;color:#595959;font-weight:normal;">End</div>
<div class="a" style="left:767px;top:779px;width:11px;height:11px;background:#5b9bd5"></div>
<div class="t" style="left:782.00px;top:775.61px;font-size:17px;color:#595959;font-weight:normal;">Base</div>
<div class="a" style="left:832px;top:779px;width:11px;height:11px;background:#ed7d31"></div>
<div class="t" style="left:848.00px;top:775.61px;font-size:17px;color:#595959;font-weight:normal;">Fall</div>
<div class="a" style="left:888px;top:779px;width:11px;height:11px;background:#a5a5a5"></div>
<div class="t" style="left:903.00px;top:775.61px;font-size:17px;color:#595959;font-weight:normal;">Rise</div>
<svg style="left:0;top:0" width="1320" height="863"><circle cx="464.25" cy="355.25" r="4.9" fill="#fff" stroke="#999" stroke-width="1.5"/><circle cx="847.75" cy="355.25" r="4.9" fill="#fff" stroke="#999" stroke-width="1.5"/><circle cx="1231.25" cy="355.25" r="4.9" fill="#fff" stroke="#999" stroke-width="1.5"/><circle cx="464.25" cy="585.5" r="4.9" fill="#fff" stroke="#999" stroke-width="1.5"/><circle cx="1231.25" cy="585.5" r="4.9" fill="#fff" stroke="#999" stroke-width="1.5"/><circle cx="464.25" cy="815.5" r="4.9" fill="#fff" stroke="#999" stroke-width="1.5"/><circle cx="847.75" cy="815.5" r="4.9" fill="#fff" stroke="#999" stroke-width="1.5"/><circle cx="1231.25" cy="815.5" r="4.9" fill="#fff" stroke="#999" stroke-width="1.5"/></svg>
<div class="a" style="left:1244px;top:354px;width:28px;height:28px;background:#fff;border:1px solid #a6a6a6"></div>
<div class="a" style="left:1244px;top:392px;width:28px;height:28px;background:#fff;border:1px solid #a6a6a6"></div>
<div class="a" style="left:1244px;top:430px;width:28px;height:28px;background:#fff;border:1px solid #a6a6a6"></div>
<svg style="left:1244px;top:354px" width="28" height="28"><path d="M12 7h4v5h5v4h-5v5h-4v-5H7v-4h5z" fill="#66a68c"/></svg>
<svg style="left:1244px;top:392px" width="28" height="28"><path d="M22.7 5L23 10.5 19 12.8 17.6 10.6z" fill="#6b6b6b"/><path d="M15 13.8l1.6-1.7 2 2.1-1.7 1.7z" fill="#6b6b6b"/><path d="M5.5 21.8L10.2 17Q12.3 15 14.6 15.2Q16.2 16.2 15.6 18.2Q14.2 20.6 11 21.4z" fill="#3f78b8"/><path d="M11.8 16.6q1.2-1 2.6-.6q.6 1.2-.3 2.2q-1.2-.2-2.3-1.6z" fill="#fff"/></svg>
<svg style="left:1244px;top:430px" width="28" height="28"><path d="M5 6H23V7.3L15.8 14.6V21.8H12.2V14.6L5 7.3Z" fill="#7b7b7b"/><path d="M7.2 7.2L13.2 13.1V20.6" fill="none" stroke="#fff" stroke-width="0.9"/></svg>
</body></html>
